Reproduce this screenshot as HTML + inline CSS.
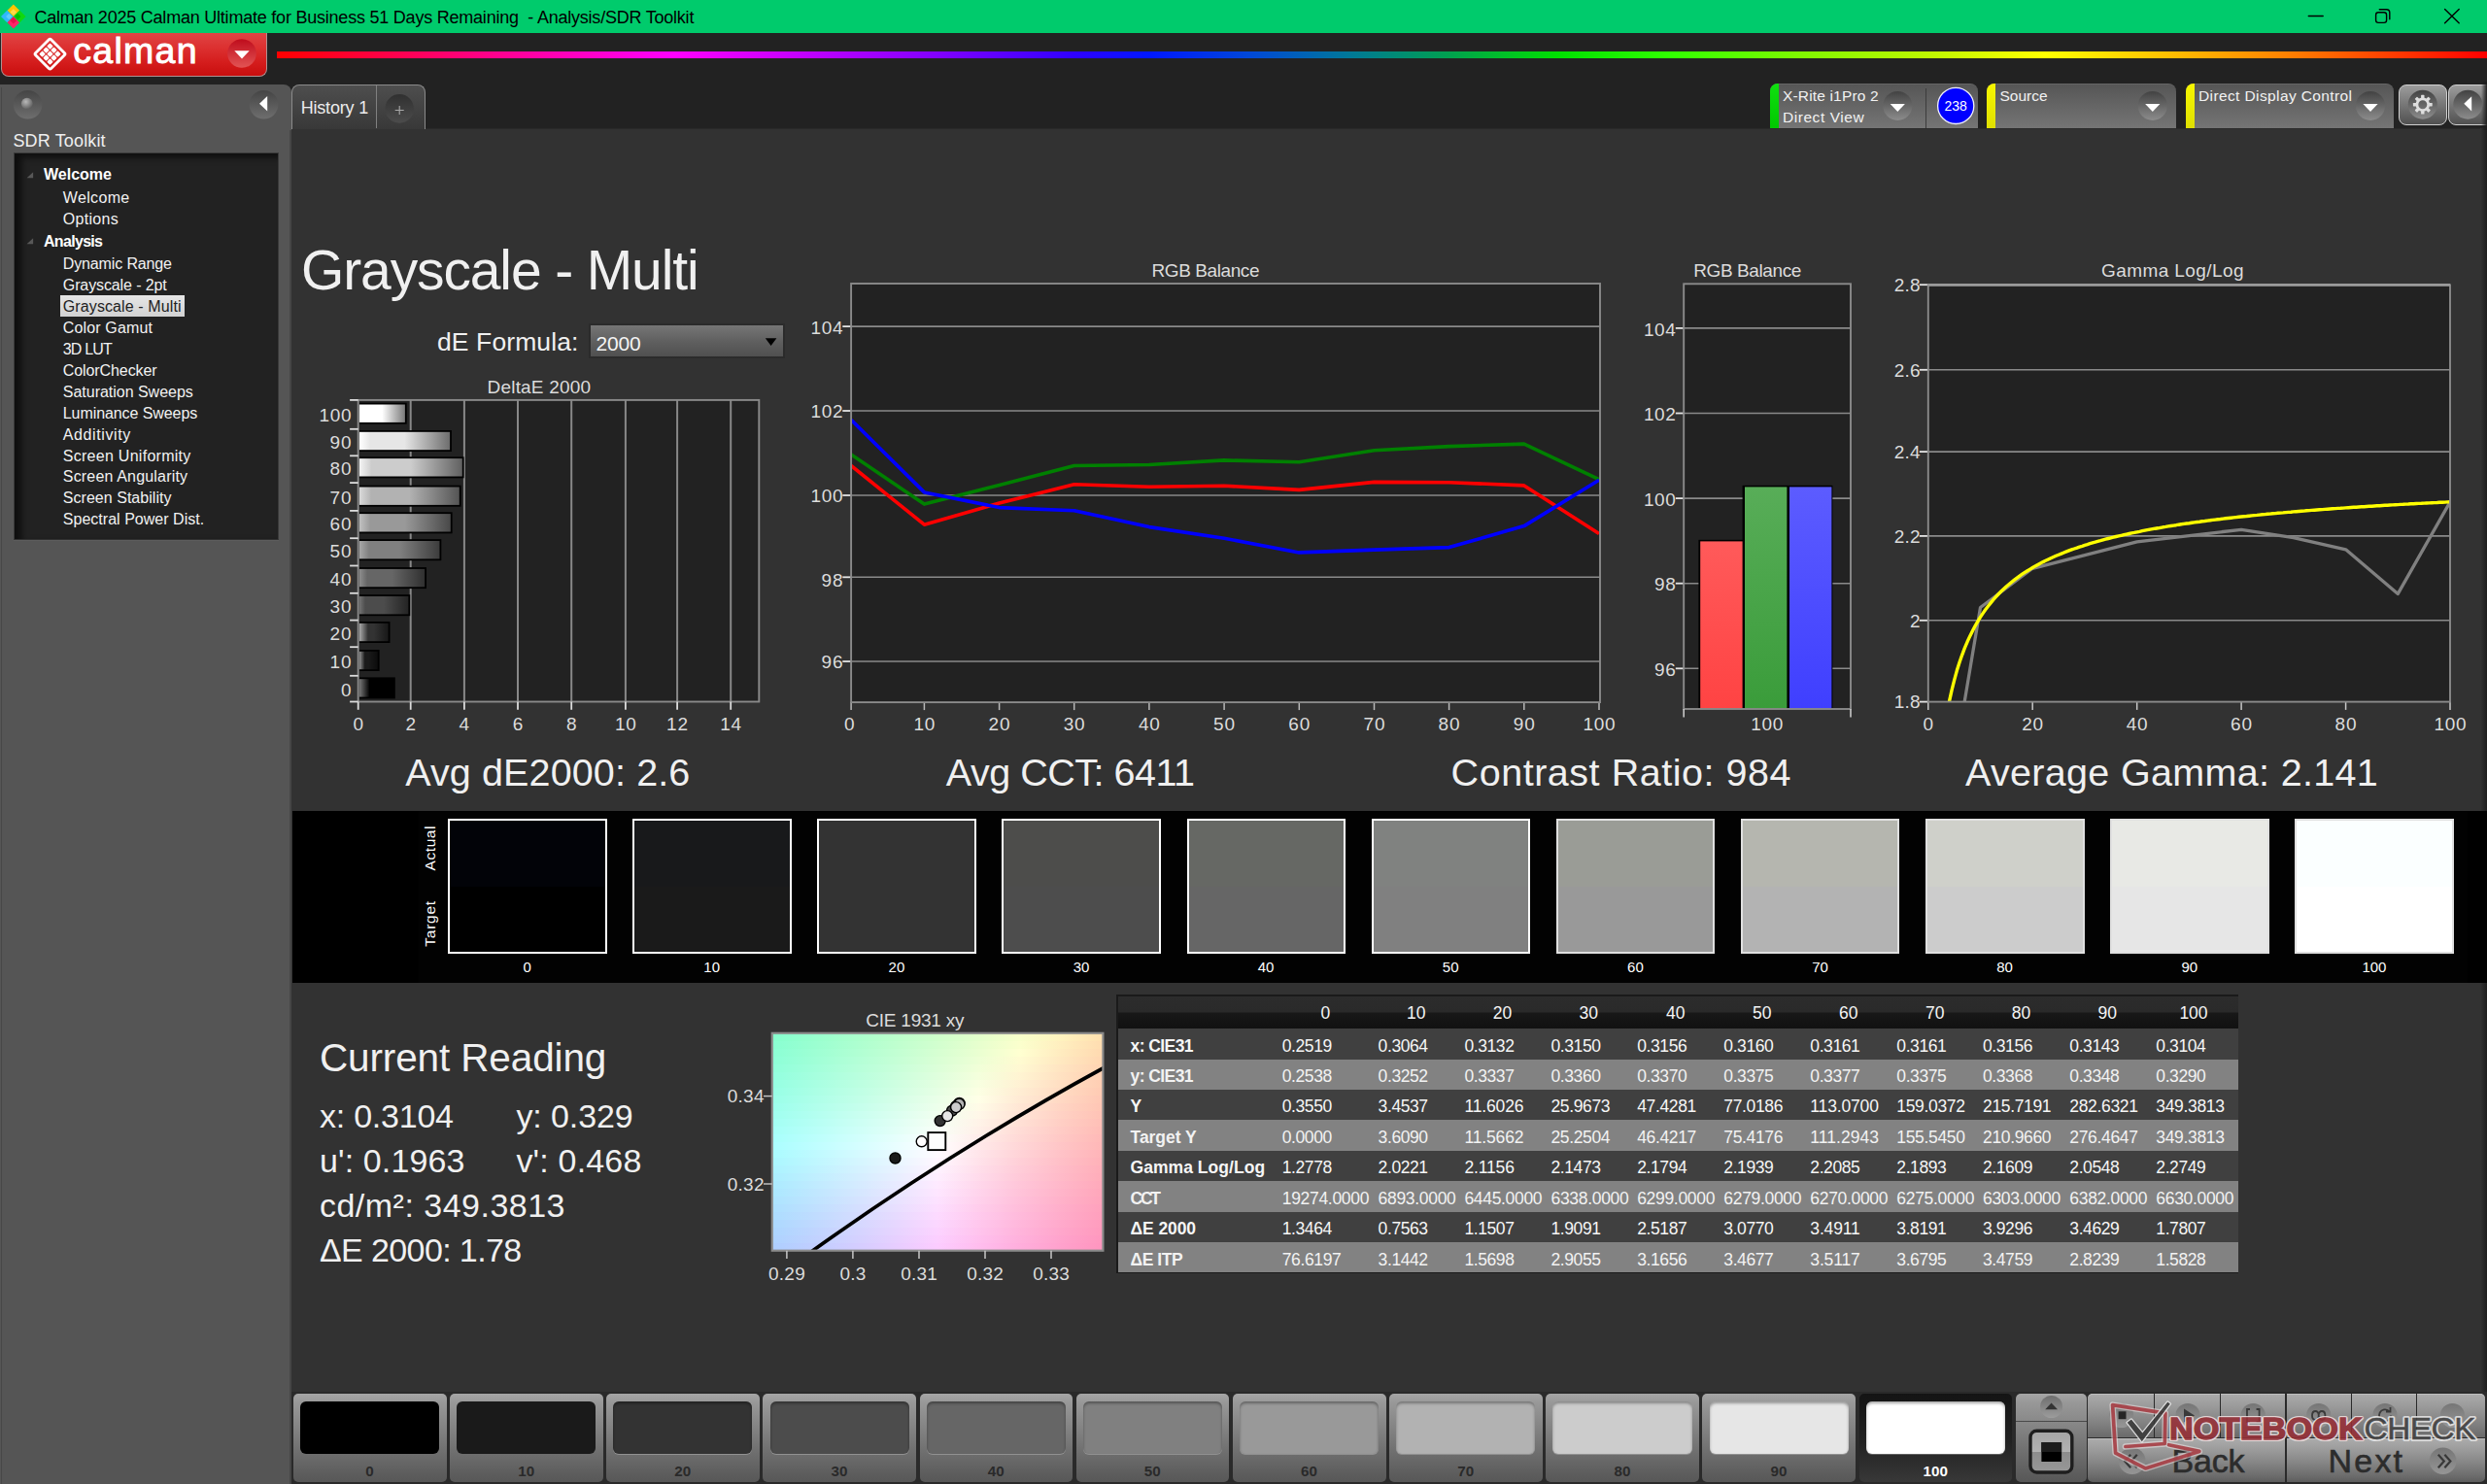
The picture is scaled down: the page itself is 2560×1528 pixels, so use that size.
<!DOCTYPE html>
<html><head><meta charset="utf-8"><title>Calman</title>
<style>
html,body{margin:0;padding:0;background:#222;}
html{overflow:hidden;width:2560px;height:1528px;}
body{width:2560px;height:1528px;position:relative;overflow:hidden;font-family:"Liberation Sans",sans-serif;}
#boxes div{position:absolute;box-sizing:border-box;}
#ov{position:absolute;left:0;top:0;}
#ov text{font-family:"Liberation Sans",sans-serif;}
</style></head><body>
<div id="boxes">
<div style="left:0.0px;top:0.0px;width:2560.0px;height:34.0px;background:#00cb6c;"></div>
<div style="left:0.5px;top:34.0px;width:274.5px;height:44.8px;background:linear-gradient(#e04444 0%,#dc3030 35%,#d41c1c 70%,#c80e0e 100%);border-radius:0 0 8px 8px;border:1px solid #b09090;border-top:none;"></div>
<div style="left:285.0px;top:52.8px;width:2275.0px;height:7.6px;background:linear-gradient(90deg,#ff0000 0%,#ff0048 5%,#ff0090 10%,#ff00ff 18%,#c000ff 24%,#8000ff 30%,#3000ff 36%,#0018ff 39.5%,#0048d8 44%,#007898 48.5%,#00a050 53%,#00e000 58%,#30ff00 63%,#80f800 69%,#c0f800 75%,#ffff00 80%,#ffc000 85.5%,#ff8000 91%,#ff3800 96%,#ff0000 100%);"></div>
<div style="left:0.0px;top:86.8px;width:299.6px;height:1450.0px;background:#555555;border-radius:0 8px 0 0;"></div>
<div style="left:0.9px;top:90.0px;width:1.2px;height:1440.0px;background:#484848;"></div>
<div style="left:298.2px;top:134.0px;width:1.9px;height:1400.0px;background:#464646;"></div>
<div style="left:13.6px;top:156.8px;width:273.0px;height:399.3px;background:#222;border:1px solid #3a3a3a;border-bottom:1.5px solid #303030;box-shadow:inset 7px 4px 7px rgba(0,0,0,.6),0 1px 0 #5c5c5c;"></div>
<div style="left:61.8px;top:304.4px;width:128.4px;height:21.8px;background:linear-gradient(#e6e6e6,#d2d2d2);"></div>
<div style="left:300.0px;top:132.0px;width:2260.0px;height:1400.0px;background:#323232;border-top:1.5px solid #2a2a2a;"></div>
<div style="left:2553.0px;top:132.0px;width:7.0px;height:1400.0px;background:linear-gradient(90deg,#323232,#1d1d1d);"></div>
<div style="left:300.0px;top:86.5px;width:138.4px;height:46.0px;background:linear-gradient(#4e4e4e,#383838);border:1.2px solid #8a8a8a;border-bottom:none;border-radius:8px 8px 0 0;"></div>
<div style="left:387.2px;top:87.5px;width:1.2px;height:44.5px;background:#808080;"></div>
<div style="left:1821.8px;top:86.4px;width:214.0px;height:45.6px;background:linear-gradient(#565656,#757575);border-radius:8px 8px 0 0;border-top:1px solid #666;overflow:hidden;"></div>
<div style="left:1821.8px;top:86.4px;width:9.0px;height:45.6px;background:linear-gradient(#10e010,#00c800);border-radius:8px 0 0 0;"></div>
<div style="left:2045.2px;top:86.4px;width:195.1px;height:45.6px;background:linear-gradient(#565656,#757575);border-radius:8px 8px 0 0;border-top:1px solid #666;overflow:hidden;"></div>
<div style="left:2045.2px;top:86.4px;width:9.0px;height:45.6px;background:linear-gradient(#f6f600,#e0e000);border-radius:8px 0 0 0;"></div>
<div style="left:2249.7px;top:86.4px;width:214.2px;height:45.6px;background:linear-gradient(#565656,#757575);border-radius:8px 8px 0 0;border-top:1px solid #666;overflow:hidden;"></div>
<div style="left:2249.7px;top:86.4px;width:9.0px;height:45.6px;background:linear-gradient(#f6f600,#e0e000);border-radius:8px 0 0 0;"></div>
<div style="left:1981.8px;top:91.4px;width:1.6px;height:40.6px;background:#3c3c3c;"></div>
<div style="left:2468.8px;top:86.5px;width:50.2px;height:42.0px;background:linear-gradient(#9c9c9c,#5c5c5c 85%,#505050);border:1.5px solid #d0d0d0;border-radius:8px;"></div>
<div style="left:2519.8px;top:86.5px;width:50.0px;height:42.0px;background:linear-gradient(#9c9c9c,#5c5c5c 85%,#505050);border:1.5px solid #d0d0d0;border-radius:8px;"></div>
<div style="left:2553.5px;top:84.0px;width:6.5px;height:50.0px;background:linear-gradient(90deg,rgba(30,30,30,0),rgba(26,26,26,.95));"></div>
<div style="left:605.9px;top:333.0px;width:202.0px;height:35.7px;background:linear-gradient(#767676,#5e5e5e 55%,#505050);border:2px solid #2b2b2b;"></div>
<div style="left:301.2px;top:835.3px;width:2259.0px;height:177.2px;background:#000;"></div>
<div style="left:431.0px;top:835.3px;width:2109.0px;height:177.2px;background:#020202;"></div>
<div style="left:461.0px;top:842.8px;width:163.5px;height:139.3px;background:linear-gradient(#020308 0,#020308 50%,#000000 50%,#000000 100%);border:2px solid #ffffff;"></div>
<div style="left:651.1px;top:842.8px;width:163.5px;height:139.3px;background:linear-gradient(#18191b 0,#18191b 50%,#1a1a1a 50%,#1a1a1a 100%);border:2px solid #ffffff;"></div>
<div style="left:841.3px;top:842.8px;width:163.5px;height:139.3px;background:linear-gradient(#333333 0,#333333 50%,#333333 50%,#333333 100%);border:2px solid #ffffff;"></div>
<div style="left:1031.4px;top:842.8px;width:163.5px;height:139.3px;background:linear-gradient(#4d4d4b 0,#4d4d4b 50%,#4d4d4d 50%,#4d4d4d 100%);border:2px solid #ffffff;"></div>
<div style="left:1221.5px;top:842.8px;width:163.5px;height:139.3px;background:linear-gradient(#666864 0,#666864 50%,#666666 50%,#666666 100%);border:2px solid #ffffff;"></div>
<div style="left:1411.7px;top:842.8px;width:163.5px;height:139.3px;background:linear-gradient(#808280 0,#808280 50%,#808080 50%,#808080 100%);border:2px solid #ffffff;"></div>
<div style="left:1601.8px;top:842.8px;width:163.5px;height:139.3px;background:linear-gradient(#9a9c96 0,#9a9c96 50%,#999999 50%,#999999 100%);border:2px solid #e0e0e0;"></div>
<div style="left:1791.9px;top:842.8px;width:163.5px;height:139.3px;background:linear-gradient(#b5b6af 0,#b5b6af 50%,#b3b3b3 50%,#b3b3b3 100%);border:2px solid #e0e0e0;"></div>
<div style="left:1982.0px;top:842.8px;width:163.5px;height:139.3px;background:linear-gradient(#cfd0ca 0,#cfd0ca 50%,#cccccc 50%,#cccccc 100%);border:2px solid #e0e0e0;"></div>
<div style="left:2172.2px;top:842.8px;width:163.5px;height:139.3px;background:linear-gradient(#e8e9e5 0,#e8e9e5 50%,#e6e6e6 50%,#e6e6e6 100%);border:2px solid #e0e0e0;"></div>
<div style="left:2362.3px;top:842.8px;width:163.5px;height:139.3px;background:linear-gradient(#fbffff 0,#fbffff 50%,#ffffff 50%,#ffffff 100%);border:2px solid #e0e0e0;"></div>
<div style="left:1149.2px;top:1024.2px;width:1155.3px;height:286.7px;background:#1a1a1a;"></div>
<div style="left:1151.2px;top:1026.0px;width:1153.3px;height:33.2px;background:linear-gradient(#2c2c2c 0,#2a2a2a 48%,#181818 52%,#111 100%);"></div>
<div style="left:1151.2px;top:1059.1px;width:1153.3px;height:31.6px;background:#404040;"></div>
<div style="left:1151.2px;top:1090.5px;width:1153.3px;height:31.6px;background:#828282;"></div>
<div style="left:1151.2px;top:1122.0px;width:1153.3px;height:31.6px;background:#404040;"></div>
<div style="left:1151.2px;top:1153.4px;width:1153.3px;height:31.6px;background:#828282;"></div>
<div style="left:1151.2px;top:1184.8px;width:1153.3px;height:31.6px;background:#404040;"></div>
<div style="left:1151.2px;top:1216.2px;width:1153.3px;height:31.6px;background:#828282;"></div>
<div style="left:1151.2px;top:1247.7px;width:1153.3px;height:31.6px;background:#404040;"></div>
<div style="left:1151.2px;top:1279.1px;width:1153.3px;height:31.3px;background:#828282;"></div>
<div style="left:300.0px;top:1433.4px;width:2260.0px;height:95.0px;background:#2a2a2a;"></div>
<div style="left:301.8px;top:1434.8px;width:157.8px;height:91.2px;background:linear-gradient(#a6a6a6 0,#989898 10%,#868686 35%,#6c6c6c 70%,#5c5c5c 92%,#585858);border-radius:5px;"></div>
<div style="left:309.0px;top:1442.5px;width:143.2px;height:54.0px;background:rgb(0,0,0);border-radius:6px;"></div>
<div style="left:463.0px;top:1434.8px;width:157.8px;height:91.2px;background:linear-gradient(#a6a6a6 0,#989898 10%,#868686 35%,#6c6c6c 70%,#5c5c5c 92%,#585858);border-radius:5px;"></div>
<div style="left:470.2px;top:1442.5px;width:143.2px;height:54.0px;background:rgb(26,26,26);border-radius:6px;"></div>
<div style="left:624.1px;top:1434.8px;width:157.8px;height:91.2px;background:linear-gradient(#a6a6a6 0,#989898 10%,#868686 35%,#6c6c6c 70%,#5c5c5c 92%,#585858);border-radius:5px;"></div>
<div style="left:631.3px;top:1442.5px;width:143.2px;height:54.0px;background:rgb(51,51,51);border-radius:6px;box-shadow:inset 0 2px 3px rgba(0,0,0,.35),0 1px 0 rgba(255,255,255,.25);"></div>
<div style="left:785.3px;top:1434.8px;width:157.8px;height:91.2px;background:linear-gradient(#a6a6a6 0,#989898 10%,#868686 35%,#6c6c6c 70%,#5c5c5c 92%,#585858);border-radius:5px;"></div>
<div style="left:792.5px;top:1442.5px;width:143.2px;height:54.0px;background:rgb(76,76,76);border-radius:6px;box-shadow:inset 0 2px 3px rgba(0,0,0,.35),0 1px 0 rgba(255,255,255,.25);"></div>
<div style="left:946.5px;top:1434.8px;width:157.8px;height:91.2px;background:linear-gradient(#a6a6a6 0,#989898 10%,#868686 35%,#6c6c6c 70%,#5c5c5c 92%,#585858);border-radius:5px;"></div>
<div style="left:953.7px;top:1442.5px;width:143.2px;height:54.0px;background:rgb(102,102,102);border-radius:6px;box-shadow:inset 0 2px 3px rgba(0,0,0,.35),0 1px 0 rgba(255,255,255,.25);"></div>
<div style="left:1107.6px;top:1434.8px;width:157.8px;height:91.2px;background:linear-gradient(#a6a6a6 0,#989898 10%,#868686 35%,#6c6c6c 70%,#5c5c5c 92%,#585858);border-radius:5px;"></div>
<div style="left:1114.8px;top:1442.5px;width:143.2px;height:54.0px;background:rgb(128,128,128);border-radius:6px;box-shadow:inset 0 2px 3px rgba(0,0,0,.35),0 1px 0 rgba(255,255,255,.25);"></div>
<div style="left:1268.8px;top:1434.8px;width:157.8px;height:91.2px;background:linear-gradient(#a6a6a6 0,#989898 10%,#868686 35%,#6c6c6c 70%,#5c5c5c 92%,#585858);border-radius:5px;"></div>
<div style="left:1276.0px;top:1442.5px;width:143.2px;height:54.0px;background:rgb(153,153,153);border-radius:6px;box-shadow:inset 0 2px 3px rgba(0,0,0,.35),0 1px 0 rgba(255,255,255,.25);"></div>
<div style="left:1430.0px;top:1434.8px;width:157.8px;height:91.2px;background:linear-gradient(#a6a6a6 0,#989898 10%,#868686 35%,#6c6c6c 70%,#5c5c5c 92%,#585858);border-radius:5px;"></div>
<div style="left:1437.2px;top:1442.5px;width:143.2px;height:54.0px;background:rgb(178,178,178);border-radius:6px;box-shadow:inset 0 2px 3px rgba(0,0,0,.35),0 1px 0 rgba(255,255,255,.25);"></div>
<div style="left:1591.2px;top:1434.8px;width:157.8px;height:91.2px;background:linear-gradient(#a6a6a6 0,#989898 10%,#868686 35%,#6c6c6c 70%,#5c5c5c 92%,#585858);border-radius:5px;"></div>
<div style="left:1598.4px;top:1442.5px;width:143.2px;height:54.0px;background:rgb(204,204,204);border-radius:6px;box-shadow:inset 0 2px 3px rgba(0,0,0,.35),0 1px 0 rgba(255,255,255,.25);"></div>
<div style="left:1752.3px;top:1434.8px;width:157.8px;height:91.2px;background:linear-gradient(#a6a6a6 0,#989898 10%,#868686 35%,#6c6c6c 70%,#5c5c5c 92%,#585858);border-radius:5px;"></div>
<div style="left:1759.5px;top:1442.5px;width:143.2px;height:54.0px;background:rgb(230,230,230);border-radius:6px;box-shadow:inset 0 2px 3px rgba(0,0,0,.35),0 1px 0 rgba(255,255,255,.25);"></div>
<div style="left:1913.5px;top:1434.8px;width:157.8px;height:91.2px;background:linear-gradient(#141414,#222 55%,#383838);border-radius:5px;"></div>
<div style="left:1920.7px;top:1442.5px;width:143.2px;height:54.0px;background:rgb(255,255,255);border-radius:6px;box-shadow:inset 0 2px 3px rgba(0,0,0,.35),0 1px 0 rgba(255,255,255,.25);"></div>
<div style="left:2075.4px;top:1434.8px;width:72.4px;height:91.2px;background:linear-gradient(#a6a6a6 0,#989898 10%,#868686 35%,#6c6c6c 70%,#5c5c5c 92%,#585858);border-radius:5px;"></div>
<div style="left:2075.4px;top:1462.6px;width:72.4px;height:1.4px;background:#4a4a4a;"></div>
<div style="left:2149.0px;top:1435.2px;width:68.0px;height:44.6px;background:linear-gradient(#ababab 0,#9a9a9a 30%,#7c7c7c 75%,#6a6a6a);box-shadow:inset 0 1px 0 #bdbdbd;border-radius:5px 0 0 0;"></div>
<div style="left:2218.2px;top:1435.2px;width:66.8px;height:44.6px;background:linear-gradient(#ababab 0,#9a9a9a 30%,#7c7c7c 75%,#6a6a6a);box-shadow:inset 0 1px 0 #bdbdbd;"></div>
<div style="left:2286.2px;top:1435.2px;width:66.1px;height:44.6px;background:linear-gradient(#ababab 0,#9a9a9a 30%,#7c7c7c 75%,#6a6a6a);box-shadow:inset 0 1px 0 #bdbdbd;"></div>
<div style="left:2353.5px;top:1435.2px;width:66.6px;height:44.6px;background:linear-gradient(#ababab 0,#9a9a9a 30%,#7c7c7c 75%,#6a6a6a);box-shadow:inset 0 1px 0 #bdbdbd;"></div>
<div style="left:2421.3px;top:1435.2px;width:65.7px;height:44.6px;background:linear-gradient(#ababab 0,#9a9a9a 30%,#7c7c7c 75%,#6a6a6a);box-shadow:inset 0 1px 0 #bdbdbd;"></div>
<div style="left:2488.2px;top:1435.2px;width:70.0px;height:44.6px;background:linear-gradient(#ababab 0,#9a9a9a 30%,#7c7c7c 75%,#6a6a6a);box-shadow:inset 0 1px 0 #bdbdbd;border-radius:0 5px 0 0;"></div>
<div style="left:2149.0px;top:1481.2px;width:203.4px;height:44.6px;background:linear-gradient(#acacac 0,#9c9c9c 25%,#868686 55%,#6a6a6a 88%,#5e5e5e);box-shadow:inset 0 1px 0 #bdbdbd;border-radius:0 0 0 5px;"></div>
<div style="left:2353.7px;top:1481.2px;width:204.6px;height:44.6px;background:linear-gradient(#acacac 0,#9c9c9c 25%,#868686 55%,#6a6a6a 88%,#5e5e5e);box-shadow:inset 0 1px 0 #bdbdbd;border-radius:0 0 5px 0;"></div>
</div>
<svg id="ov" width="2560" height="1528" viewBox="0 0 2560 1528">
<defs>
<linearGradient id="rc" x1="0" y1="0" x2="0" y2="1"><stop offset="0" stop-color="#bf0c1c"/><stop offset="1" stop-color="#e25454"/></linearGradient>
<linearGradient id="gc" x1="0" y1="0" x2="0" y2="1"><stop offset="0" stop-color="#454545"/><stop offset="1" stop-color="#6e6e6e"/></linearGradient>
<radialGradient id="ball" cx="0.4" cy="0.35" r="0.7"><stop offset="0" stop-color="#b8b8b8"/><stop offset="1" stop-color="#5a5a5a"/></radialGradient>
<linearGradient id="dk" x1="0" y1="0" x2="0" y2="1"><stop offset="0" stop-color="#303030"/><stop offset="1" stop-color="#4c4c4c"/></linearGradient>
<linearGradient id="dd" x1="0" y1="0" x2="0" y2="1"><stop offset="0" stop-color="#424242"/><stop offset="1" stop-color="#8c8c8c"/></linearGradient>
<linearGradient id="b0" x1="0" y1="0" x2="1" y2="0"><stop offset="0" stop-color="rgb(120,120,120)"/><stop offset="0.3" stop-color="rgb(0,0,0)"/><stop offset="0.5" stop-color="rgb(0,0,0)"/><stop offset="1" stop-color="rgb(0,0,0)"/></linearGradient>
<linearGradient id="b1" x1="0" y1="0" x2="1" y2="0"><stop offset="0" stop-color="rgb(146,146,146)"/><stop offset="0.3" stop-color="rgb(26,26,26)"/><stop offset="0.5" stop-color="rgb(26,26,26)"/><stop offset="1" stop-color="rgb(12,12,12)"/></linearGradient>
<linearGradient id="b2" x1="0" y1="0" x2="1" y2="0"><stop offset="0" stop-color="rgb(171,171,171)"/><stop offset="0.3" stop-color="rgb(51,51,51)"/><stop offset="0.5" stop-color="rgb(51,51,51)"/><stop offset="1" stop-color="rgb(24,24,24)"/></linearGradient>
<linearGradient id="b3" x1="0" y1="0" x2="1" y2="0"><stop offset="0" stop-color="rgb(116,116,116)"/><stop offset="0.12" stop-color="rgb(76,76,76)"/><stop offset="0.5" stop-color="rgb(76,76,76)"/><stop offset="1" stop-color="rgb(36,36,36)"/></linearGradient>
<linearGradient id="b4" x1="0" y1="0" x2="1" y2="0"><stop offset="0" stop-color="rgb(142,142,142)"/><stop offset="0.12" stop-color="rgb(102,102,102)"/><stop offset="0.5" stop-color="rgb(102,102,102)"/><stop offset="1" stop-color="rgb(48,48,48)"/></linearGradient>
<linearGradient id="b5" x1="0" y1="0" x2="1" y2="0"><stop offset="0" stop-color="rgb(168,168,168)"/><stop offset="0.12" stop-color="rgb(128,128,128)"/><stop offset="0.5" stop-color="rgb(128,128,128)"/><stop offset="1" stop-color="rgb(61,61,61)"/></linearGradient>
<linearGradient id="b6" x1="0" y1="0" x2="1" y2="0"><stop offset="0" stop-color="rgb(193,193,193)"/><stop offset="0.12" stop-color="rgb(153,153,153)"/><stop offset="0.5" stop-color="rgb(153,153,153)"/><stop offset="1" stop-color="rgb(73,73,73)"/></linearGradient>
<linearGradient id="b7" x1="0" y1="0" x2="1" y2="0"><stop offset="0" stop-color="rgb(218,218,218)"/><stop offset="0.12" stop-color="rgb(178,178,178)"/><stop offset="0.5" stop-color="rgb(178,178,178)"/><stop offset="1" stop-color="rgb(85,85,85)"/></linearGradient>
<linearGradient id="b8" x1="0" y1="0" x2="1" y2="0"><stop offset="0" stop-color="rgb(244,244,244)"/><stop offset="0.12" stop-color="rgb(204,204,204)"/><stop offset="0.5" stop-color="rgb(204,204,204)"/><stop offset="1" stop-color="rgb(97,97,97)"/></linearGradient>
<linearGradient id="b9" x1="0" y1="0" x2="1" y2="0"><stop offset="0" stop-color="rgb(255,255,255)"/><stop offset="0.12" stop-color="rgb(230,230,230)"/><stop offset="0.5" stop-color="rgb(230,230,230)"/><stop offset="1" stop-color="rgb(110,110,110)"/></linearGradient>
<linearGradient id="b10" x1="0" y1="0" x2="1" y2="0"><stop offset="0" stop-color="rgb(255,255,255)"/><stop offset="0.12" stop-color="rgb(255,255,255)"/><stop offset="0.5" stop-color="rgb(255,255,255)"/><stop offset="1" stop-color="rgb(122,122,122)"/></linearGradient>
<linearGradient id="br" x1="0" y1="0" x2="0" y2="1"><stop offset="0" stop-color="#ff5a5a"/><stop offset="1" stop-color="#ff4343"/></linearGradient>
<linearGradient id="bg" x1="0" y1="0" x2="0" y2="1"><stop offset="0" stop-color="#58ad58"/><stop offset="1" stop-color="#3a9c3a"/></linearGradient>
<linearGradient id="bb" x1="0" y1="0" x2="0" y2="1"><stop offset="0" stop-color="#5c5cff"/><stop offset="1" stop-color="#3f3fff"/></linearGradient>
<linearGradient id="c0" x1="0" y1="0" x2="1" y2="0"><stop offset="0.000" stop-color="rgb(134,255,206)"/><stop offset="0.125" stop-color="rgb(152,255,206)"/><stop offset="0.250" stop-color="rgb(170,255,205)"/><stop offset="0.375" stop-color="rgb(188,255,204)"/><stop offset="0.500" stop-color="rgb(207,255,203)"/><stop offset="0.625" stop-color="rgb(227,255,203)"/><stop offset="0.750" stop-color="rgb(248,255,202)"/><stop offset="0.875" stop-color="rgb(255,242,190)"/><stop offset="1.000" stop-color="rgb(255,224,175)"/></linearGradient>
<linearGradient id="c1" x1="0" y1="0" x2="1" y2="0"><stop offset="0.000" stop-color="rgb(137,255,210)"/><stop offset="0.125" stop-color="rgb(154,255,209)"/><stop offset="0.250" stop-color="rgb(172,255,208)"/><stop offset="0.375" stop-color="rgb(191,255,207)"/><stop offset="0.500" stop-color="rgb(210,255,207)"/><stop offset="0.625" stop-color="rgb(231,255,206)"/><stop offset="0.750" stop-color="rgb(251,255,205)"/><stop offset="0.875" stop-color="rgb(255,238,191)"/><stop offset="1.000" stop-color="rgb(255,220,176)"/></linearGradient>
<linearGradient id="c2" x1="0" y1="0" x2="1" y2="0"><stop offset="0.000" stop-color="rgb(139,255,213)"/><stop offset="0.125" stop-color="rgb(157,255,212)"/><stop offset="0.250" stop-color="rgb(175,255,211)"/><stop offset="0.375" stop-color="rgb(194,255,211)"/><stop offset="0.500" stop-color="rgb(214,255,210)"/><stop offset="0.625" stop-color="rgb(234,255,209)"/><stop offset="0.750" stop-color="rgb(255,255,209)"/><stop offset="0.875" stop-color="rgb(255,235,191)"/><stop offset="1.000" stop-color="rgb(255,217,176)"/></linearGradient>
<linearGradient id="c3" x1="0" y1="0" x2="1" y2="0"><stop offset="0.000" stop-color="rgb(141,255,216)"/><stop offset="0.125" stop-color="rgb(159,255,215)"/><stop offset="0.250" stop-color="rgb(178,255,215)"/><stop offset="0.375" stop-color="rgb(197,255,214)"/><stop offset="0.500" stop-color="rgb(217,255,213)"/><stop offset="0.625" stop-color="rgb(237,255,213)"/><stop offset="0.750" stop-color="rgb(255,251,209)"/><stop offset="0.875" stop-color="rgb(255,232,192)"/><stop offset="1.000" stop-color="rgb(255,214,177)"/></linearGradient>
<linearGradient id="c4" x1="0" y1="0" x2="1" y2="0"><stop offset="0.000" stop-color="rgb(144,255,219)"/><stop offset="0.125" stop-color="rgb(162,255,219)"/><stop offset="0.250" stop-color="rgb(181,255,218)"/><stop offset="0.375" stop-color="rgb(200,255,218)"/><stop offset="0.500" stop-color="rgb(220,255,217)"/><stop offset="0.625" stop-color="rgb(241,255,216)"/><stop offset="0.750" stop-color="rgb(255,248,210)"/><stop offset="0.875" stop-color="rgb(255,228,193)"/><stop offset="1.000" stop-color="rgb(255,211,178)"/></linearGradient>
<linearGradient id="c5" x1="0" y1="0" x2="1" y2="0"><stop offset="0.000" stop-color="rgb(146,255,223)"/><stop offset="0.125" stop-color="rgb(165,255,222)"/><stop offset="0.250" stop-color="rgb(183,255,222)"/><stop offset="0.375" stop-color="rgb(203,255,221)"/><stop offset="0.500" stop-color="rgb(223,255,221)"/><stop offset="0.625" stop-color="rgb(244,255,220)"/><stop offset="0.750" stop-color="rgb(255,244,210)"/><stop offset="0.875" stop-color="rgb(255,225,193)"/><stop offset="1.000" stop-color="rgb(255,208,178)"/></linearGradient>
<linearGradient id="c6" x1="0" y1="0" x2="1" y2="0"><stop offset="0.000" stop-color="rgb(149,255,226)"/><stop offset="0.125" stop-color="rgb(167,255,226)"/><stop offset="0.250" stop-color="rgb(186,255,225)"/><stop offset="0.375" stop-color="rgb(206,255,225)"/><stop offset="0.500" stop-color="rgb(227,255,224)"/><stop offset="0.625" stop-color="rgb(248,255,224)"/><stop offset="0.750" stop-color="rgb(255,241,211)"/><stop offset="0.875" stop-color="rgb(255,222,194)"/><stop offset="1.000" stop-color="rgb(255,205,179)"/></linearGradient>
<linearGradient id="c7" x1="0" y1="0" x2="1" y2="0"><stop offset="0.000" stop-color="rgb(151,255,230)"/><stop offset="0.125" stop-color="rgb(170,255,229)"/><stop offset="0.250" stop-color="rgb(189,255,229)"/><stop offset="0.375" stop-color="rgb(209,255,228)"/><stop offset="0.500" stop-color="rgb(230,255,228)"/><stop offset="0.625" stop-color="rgb(252,255,227)"/><stop offset="0.750" stop-color="rgb(255,237,211)"/><stop offset="0.875" stop-color="rgb(255,219,194)"/><stop offset="1.000" stop-color="rgb(255,202,179)"/></linearGradient>
<linearGradient id="c8" x1="0" y1="0" x2="1" y2="0"><stop offset="0.000" stop-color="rgb(154,255,233)"/><stop offset="0.125" stop-color="rgb(173,255,233)"/><stop offset="0.250" stop-color="rgb(192,255,232)"/><stop offset="0.375" stop-color="rgb(213,255,232)"/><stop offset="0.500" stop-color="rgb(234,255,232)"/><stop offset="0.625" stop-color="rgb(255,255,231)"/><stop offset="0.750" stop-color="rgb(255,234,212)"/><stop offset="0.875" stop-color="rgb(255,216,195)"/><stop offset="1.000" stop-color="rgb(255,199,180)"/></linearGradient>
<linearGradient id="c9" x1="0" y1="0" x2="1" y2="0"><stop offset="0.000" stop-color="rgb(156,255,237)"/><stop offset="0.125" stop-color="rgb(176,255,236)"/><stop offset="0.250" stop-color="rgb(195,255,236)"/><stop offset="0.375" stop-color="rgb(216,255,236)"/><stop offset="0.500" stop-color="rgb(237,255,235)"/><stop offset="0.625" stop-color="rgb(255,251,231)"/><stop offset="0.750" stop-color="rgb(255,230,212)"/><stop offset="0.875" stop-color="rgb(255,212,195)"/><stop offset="1.000" stop-color="rgb(255,197,180)"/></linearGradient>
<linearGradient id="c10" x1="0" y1="0" x2="1" y2="0"><stop offset="0.000" stop-color="rgb(159,255,240)"/><stop offset="0.125" stop-color="rgb(178,255,240)"/><stop offset="0.250" stop-color="rgb(199,255,240)"/><stop offset="0.375" stop-color="rgb(219,255,240)"/><stop offset="0.500" stop-color="rgb(241,255,239)"/><stop offset="0.625" stop-color="rgb(255,247,232)"/><stop offset="0.750" stop-color="rgb(255,227,213)"/><stop offset="0.875" stop-color="rgb(255,209,196)"/><stop offset="1.000" stop-color="rgb(255,194,181)"/></linearGradient>
<linearGradient id="c11" x1="0" y1="0" x2="1" y2="0"><stop offset="0.000" stop-color="rgb(162,255,244)"/><stop offset="0.125" stop-color="rgb(181,255,244)"/><stop offset="0.250" stop-color="rgb(202,255,244)"/><stop offset="0.375" stop-color="rgb(223,255,244)"/><stop offset="0.500" stop-color="rgb(245,255,243)"/><stop offset="0.625" stop-color="rgb(255,243,232)"/><stop offset="0.750" stop-color="rgb(255,224,213)"/><stop offset="0.875" stop-color="rgb(255,206,196)"/><stop offset="1.000" stop-color="rgb(255,191,182)"/></linearGradient>
<linearGradient id="c12" x1="0" y1="0" x2="1" y2="0"><stop offset="0.000" stop-color="rgb(165,255,248)"/><stop offset="0.125" stop-color="rgb(184,255,248)"/><stop offset="0.250" stop-color="rgb(205,255,248)"/><stop offset="0.375" stop-color="rgb(226,255,247)"/><stop offset="0.500" stop-color="rgb(248,255,247)"/><stop offset="0.625" stop-color="rgb(255,240,232)"/><stop offset="0.750" stop-color="rgb(255,220,214)"/><stop offset="0.875" stop-color="rgb(255,203,197)"/><stop offset="1.000" stop-color="rgb(255,188,182)"/></linearGradient>
<linearGradient id="c13" x1="0" y1="0" x2="1" y2="0"><stop offset="0.000" stop-color="rgb(167,255,252)"/><stop offset="0.125" stop-color="rgb(187,255,252)"/><stop offset="0.250" stop-color="rgb(208,255,252)"/><stop offset="0.375" stop-color="rgb(230,255,252)"/><stop offset="0.500" stop-color="rgb(252,255,252)"/><stop offset="0.625" stop-color="rgb(255,236,233)"/><stop offset="0.750" stop-color="rgb(255,217,214)"/><stop offset="0.875" stop-color="rgb(255,200,197)"/><stop offset="1.000" stop-color="rgb(255,185,183)"/></linearGradient>
<linearGradient id="c14" x1="0" y1="0" x2="1" y2="0"><stop offset="0.000" stop-color="rgb(170,254,255)"/><stop offset="0.125" stop-color="rgb(190,254,255)"/><stop offset="0.250" stop-color="rgb(211,254,255)"/><stop offset="0.375" stop-color="rgb(233,254,255)"/><stop offset="0.500" stop-color="rgb(255,254,255)"/><stop offset="0.625" stop-color="rgb(255,233,233)"/><stop offset="0.750" stop-color="rgb(255,214,215)"/><stop offset="0.875" stop-color="rgb(255,197,198)"/><stop offset="1.000" stop-color="rgb(255,183,183)"/></linearGradient>
<linearGradient id="c15" x1="0" y1="0" x2="1" y2="0"><stop offset="0.000" stop-color="rgb(170,251,255)"/><stop offset="0.125" stop-color="rgb(190,250,255)"/><stop offset="0.250" stop-color="rgb(211,250,255)"/><stop offset="0.375" stop-color="rgb(233,250,255)"/><stop offset="0.500" stop-color="rgb(255,250,255)"/><stop offset="0.625" stop-color="rgb(255,229,234)"/><stop offset="0.750" stop-color="rgb(255,211,215)"/><stop offset="0.875" stop-color="rgb(255,194,199)"/><stop offset="1.000" stop-color="rgb(255,180,184)"/></linearGradient>
<linearGradient id="c16" x1="0" y1="0" x2="1" y2="0"><stop offset="0.000" stop-color="rgb(170,247,255)"/><stop offset="0.125" stop-color="rgb(190,247,255)"/><stop offset="0.250" stop-color="rgb(211,246,255)"/><stop offset="0.375" stop-color="rgb(232,246,255)"/><stop offset="0.500" stop-color="rgb(255,246,255)"/><stop offset="0.625" stop-color="rgb(255,226,234)"/><stop offset="0.750" stop-color="rgb(255,207,215)"/><stop offset="0.875" stop-color="rgb(255,191,199)"/><stop offset="1.000" stop-color="rgb(255,177,184)"/></linearGradient>
<linearGradient id="c17" x1="0" y1="0" x2="1" y2="0"><stop offset="0.000" stop-color="rgb(171,243,255)"/><stop offset="0.125" stop-color="rgb(190,243,255)"/><stop offset="0.250" stop-color="rgb(211,242,255)"/><stop offset="0.375" stop-color="rgb(232,242,255)"/><stop offset="0.500" stop-color="rgb(254,242,255)"/><stop offset="0.625" stop-color="rgb(255,222,234)"/><stop offset="0.750" stop-color="rgb(255,204,216)"/><stop offset="0.875" stop-color="rgb(255,188,200)"/><stop offset="1.000" stop-color="rgb(255,174,185)"/></linearGradient>
<linearGradient id="c18" x1="0" y1="0" x2="1" y2="0"><stop offset="0.000" stop-color="rgb(171,239,255)"/><stop offset="0.125" stop-color="rgb(191,239,255)"/><stop offset="0.250" stop-color="rgb(211,238,255)"/><stop offset="0.375" stop-color="rgb(232,238,255)"/><stop offset="0.500" stop-color="rgb(254,238,255)"/><stop offset="0.625" stop-color="rgb(255,219,235)"/><stop offset="0.750" stop-color="rgb(255,201,216)"/><stop offset="0.875" stop-color="rgb(255,186,200)"/><stop offset="1.000" stop-color="rgb(255,172,185)"/></linearGradient>
<linearGradient id="c19" x1="0" y1="0" x2="1" y2="0"><stop offset="0.000" stop-color="rgb(171,235,255)"/><stop offset="0.125" stop-color="rgb(191,235,255)"/><stop offset="0.250" stop-color="rgb(211,235,255)"/><stop offset="0.375" stop-color="rgb(232,234,255)"/><stop offset="0.500" stop-color="rgb(254,234,255)"/><stop offset="0.625" stop-color="rgb(255,215,235)"/><stop offset="0.750" stop-color="rgb(255,198,217)"/><stop offset="0.875" stop-color="rgb(255,183,201)"/><stop offset="1.000" stop-color="rgb(255,169,186)"/></linearGradient>
<linearGradient id="c20" x1="0" y1="0" x2="1" y2="0"><stop offset="0.000" stop-color="rgb(171,232,255)"/><stop offset="0.125" stop-color="rgb(191,231,255)"/><stop offset="0.250" stop-color="rgb(211,231,255)"/><stop offset="0.375" stop-color="rgb(232,230,255)"/><stop offset="0.500" stop-color="rgb(254,230,255)"/><stop offset="0.625" stop-color="rgb(255,212,236)"/><stop offset="0.750" stop-color="rgb(255,195,217)"/><stop offset="0.875" stop-color="rgb(255,180,201)"/><stop offset="1.000" stop-color="rgb(255,166,186)"/></linearGradient>
<linearGradient id="c21" x1="0" y1="0" x2="1" y2="0"><stop offset="0.000" stop-color="rgb(172,228,255)"/><stop offset="0.125" stop-color="rgb(191,228,255)"/><stop offset="0.250" stop-color="rgb(211,227,255)"/><stop offset="0.375" stop-color="rgb(232,227,255)"/><stop offset="0.500" stop-color="rgb(253,226,255)"/><stop offset="0.625" stop-color="rgb(255,209,236)"/><stop offset="0.750" stop-color="rgb(255,192,218)"/><stop offset="0.875" stop-color="rgb(255,177,201)"/><stop offset="1.000" stop-color="rgb(255,164,187)"/></linearGradient>
<linearGradient id="c22" x1="0" y1="0" x2="1" y2="0"><stop offset="0.000" stop-color="rgb(172,224,255)"/><stop offset="0.125" stop-color="rgb(191,224,255)"/><stop offset="0.250" stop-color="rgb(211,223,255)"/><stop offset="0.375" stop-color="rgb(232,223,255)"/><stop offset="0.500" stop-color="rgb(253,222,255)"/><stop offset="0.625" stop-color="rgb(255,205,236)"/><stop offset="0.750" stop-color="rgb(255,189,218)"/><stop offset="0.875" stop-color="rgb(255,174,202)"/><stop offset="1.000" stop-color="rgb(255,161,188)"/></linearGradient>
<linearGradient id="c23" x1="0" y1="0" x2="1" y2="0"><stop offset="0.000" stop-color="rgb(172,221,255)"/><stop offset="0.125" stop-color="rgb(191,220,255)"/><stop offset="0.250" stop-color="rgb(211,220,255)"/><stop offset="0.375" stop-color="rgb(231,219,255)"/><stop offset="0.500" stop-color="rgb(253,218,255)"/><stop offset="0.625" stop-color="rgb(255,202,237)"/><stop offset="0.750" stop-color="rgb(255,186,219)"/><stop offset="0.875" stop-color="rgb(255,172,202)"/><stop offset="1.000" stop-color="rgb(255,159,188)"/></linearGradient>
<linearGradient id="c24" x1="0" y1="0" x2="1" y2="0"><stop offset="0.000" stop-color="rgb(172,217,255)"/><stop offset="0.125" stop-color="rgb(191,217,255)"/><stop offset="0.250" stop-color="rgb(211,216,255)"/><stop offset="0.375" stop-color="rgb(231,215,255)"/><stop offset="0.500" stop-color="rgb(252,215,255)"/><stop offset="0.625" stop-color="rgb(255,199,237)"/><stop offset="0.750" stop-color="rgb(255,183,219)"/><stop offset="0.875" stop-color="rgb(255,169,203)"/><stop offset="1.000" stop-color="rgb(255,156,189)"/></linearGradient>
<linearGradient id="c25" x1="0" y1="0" x2="1" y2="0"><stop offset="0.000" stop-color="rgb(172,214,255)"/><stop offset="0.125" stop-color="rgb(191,213,255)"/><stop offset="0.250" stop-color="rgb(211,212,255)"/><stop offset="0.375" stop-color="rgb(231,212,255)"/><stop offset="0.500" stop-color="rgb(252,211,255)"/><stop offset="0.625" stop-color="rgb(255,196,237)"/><stop offset="0.750" stop-color="rgb(255,180,219)"/><stop offset="0.875" stop-color="rgb(255,166,203)"/><stop offset="1.000" stop-color="rgb(255,154,189)"/></linearGradient>
<linearGradient id="c26" x1="0" y1="0" x2="1" y2="0"><stop offset="0.000" stop-color="rgb(173,211,255)"/><stop offset="0.125" stop-color="rgb(192,210,255)"/><stop offset="0.250" stop-color="rgb(211,209,255)"/><stop offset="0.375" stop-color="rgb(231,208,255)"/><stop offset="0.500" stop-color="rgb(252,207,255)"/><stop offset="0.625" stop-color="rgb(255,192,238)"/><stop offset="0.750" stop-color="rgb(255,177,220)"/><stop offset="0.875" stop-color="rgb(255,163,204)"/><stop offset="1.000" stop-color="rgb(255,151,190)"/></linearGradient>
<linearGradient id="c27" x1="0" y1="0" x2="1" y2="0"><stop offset="0.000" stop-color="rgb(173,207,255)"/><stop offset="0.125" stop-color="rgb(192,206,255)"/><stop offset="0.250" stop-color="rgb(211,205,255)"/><stop offset="0.375" stop-color="rgb(231,205,255)"/><stop offset="0.500" stop-color="rgb(252,204,255)"/><stop offset="0.625" stop-color="rgb(255,189,238)"/><stop offset="0.750" stop-color="rgb(255,174,220)"/><stop offset="0.875" stop-color="rgb(255,161,204)"/><stop offset="1.000" stop-color="rgb(255,149,190)"/></linearGradient>
<linearGradient id="lt" x1="0" y1="0" x2="0" y2="1"><stop offset="0" stop-color="#6e6e6e"/><stop offset="1" stop-color="#9c9c9c"/></linearGradient>
<linearGradient id="gl" x1="0" y1="0" x2="0" y2="1"><stop offset="0" stop-color="#a4a4a4"/><stop offset="0.5" stop-color="#b2b2b2"/><stop offset="0.5" stop-color="#8c8c8c"/><stop offset="1" stop-color="#989898"/></linearGradient>
</defs>
<path d="M13.8,4.500000000000001 L20.1,10.8 L13.8,17.1 L7.500000000000001,10.8 Z" fill="#ffc400"/><path d="M7.3,10.7 L13.6,17 L7.3,23.3 L1.0,17 Z" fill="#2fb8ff"/><path d="M20.3,10.7 L26.6,17 L20.3,23.3 L14.0,17 Z" fill="#10d810"/><path d="M13.8,16.9 L20.1,23.2 L13.8,29.5 L7.500000000000001,23.2 Z" fill="#ff2468"/>
<path d="M13.8,9.2 L17.2,12.6 L13.8,16.0 L10.4,12.6 Z" fill="#ffd84a"/><path d="M9.3,13.8 L12.5,17 L9.3,20.2 L6.1000000000000005,17 Z" fill="#5ccaff"/><path d="M18.3,13.8 L21.5,17 L18.3,20.2 L15.100000000000001,17 Z" fill="#00c000"/><path d="M13.8,17.8 L17.2,21.2 L13.8,24.599999999999998 L10.4,21.2 Z" fill="#e8104e"/>
<text x="35.4" y="23.8" font-size="18" fill="#000" textLength="679.0" lengthAdjust="spacing" xml:space="preserve">Calman 2025 Calman Ultimate for Business 51 Days Remaining  - Analysis/SDR Toolkit</text>
<g stroke="#000" stroke-width="1.4" fill="none" stroke-linecap="round"><path d="M2376.3,16.5 H2391.2"/><rect x="2445.6" y="12.8" width="11" height="10.6" rx="2.6"/><path d="M2449.3,9.7 H2456.5 a3.3,3.3 0 0 1 3.3,3.3 V19.8"/><path d="M2516.6,9.6 L2531.2,23.8 M2531.2,9.6 L2516.6,23.8"/></g>
<g transform="translate(51.5,55.6) rotate(45)" fill="none" stroke="#fff"><rect x="-11.3" y="-11.3" width="22.6" height="22.6" rx="1.6" stroke-width="2.9"/></g><g transform="translate(51.5,55.6) rotate(45)" fill="#fff"><rect x="-7.95" y="-7.95" width="4.7" height="4.7" rx="0.9"/><rect x="-7.95" y="-2.35" width="4.7" height="4.7" rx="0.9"/><rect x="-7.95" y="3.25" width="4.7" height="4.7" rx="0.9"/><rect x="-2.35" y="-7.95" width="4.7" height="4.7" rx="0.9"/><rect x="-2.35" y="-2.35" width="4.7" height="4.7" rx="0.9"/><rect x="-2.35" y="3.25" width="4.7" height="4.7" rx="0.9"/><rect x="3.25" y="-7.95" width="4.7" height="4.7" rx="0.9"/><rect x="3.25" y="-2.35" width="4.7" height="4.7" rx="0.9"/><rect x="3.25" y="3.25" width="4.7" height="4.7" rx="0.9"/></g>
<text x="75.3" y="65.0" font-size="37.5" fill="#fff" textLength="127.3" lengthAdjust="spacing" stroke="#fff" stroke-width="0.9">calman</text>
<circle cx="249" cy="55" r="14.8" fill="url(#rc)"/><path d="M241.3,52.2 H256.7 L249,60.6 Z" fill="#fff"/>
<circle cx="28.6" cy="107.8" r="14.8" fill="url(#gc)"/><circle cx="27.8" cy="106.6" r="5.9" fill="url(#ball)"/>
<circle cx="271.5" cy="107.8" r="14.8" fill="url(#gc)"/><path d="M267,106.8 L275.2,99 V114.4 Z" fill="#fff"/>
<text x="13.4" y="151.3" font-size="18" fill="#efefef" textLength="95.2" lengthAdjust="spacing">SDR Toolkit</text>
<path d="M34.1,177.2 V183.3 H27.6 Z" fill="#585858"/><path d="M34.1,245.2 V251.2 H27.6 Z" fill="#585858"/>
<text x="45.0" y="185.3" font-size="16" fill="#fff" font-weight="700" textLength="70.0" lengthAdjust="spacing">Welcome</text>
<text x="45.0" y="253.5" font-size="16" fill="#fff" font-weight="700" textLength="61.0" lengthAdjust="spacing">Analysis</text>
<text x="64.8" y="209.0" font-size="16" fill="#f2f2f2" textLength="68.4" lengthAdjust="spacing">Welcome</text>
<text x="64.8" y="231.0" font-size="16" fill="#f2f2f2" textLength="56.9" lengthAdjust="spacing">Options</text>
<text x="64.8" y="277.4" font-size="16" fill="#f2f2f2" textLength="112.2" lengthAdjust="spacing">Dynamic Range</text>
<text x="64.8" y="299.3" font-size="16" fill="#f2f2f2" textLength="107.0" lengthAdjust="spacing">Grayscale - 2pt</text>
<text x="64.8" y="321.2" font-size="16" fill="#222" textLength="121.7" lengthAdjust="spacing">Grayscale - Multi</text>
<text x="64.8" y="343.0" font-size="16" fill="#f2f2f2" textLength="92.1" lengthAdjust="spacing">Color Gamut</text>
<text x="64.8" y="364.9" font-size="16" fill="#f2f2f2" textLength="51.0" lengthAdjust="spacing">3D LUT</text>
<text x="64.8" y="386.8" font-size="16" fill="#f2f2f2" textLength="96.8" lengthAdjust="spacing">ColorChecker</text>
<text x="64.8" y="408.8" font-size="16" fill="#f2f2f2" textLength="134.0" lengthAdjust="spacing">Saturation Sweeps</text>
<text x="64.8" y="431.0" font-size="16" fill="#f2f2f2" textLength="138.4" lengthAdjust="spacing">Luminance Sweeps</text>
<text x="64.8" y="452.8" font-size="16" fill="#f2f2f2" textLength="69.5" lengthAdjust="spacing">Additivity</text>
<text x="64.8" y="475.2" font-size="16" fill="#f2f2f2" textLength="131.5" lengthAdjust="spacing">Screen Uniformity</text>
<text x="64.8" y="496.3" font-size="16" fill="#f2f2f2" textLength="128.2" lengthAdjust="spacing">Screen Angularity</text>
<text x="64.8" y="518.4" font-size="16" fill="#f2f2f2" textLength="111.7" lengthAdjust="spacing">Screen Stability</text>
<text x="64.8" y="540.3" font-size="16" fill="#f2f2f2" textLength="145.4" lengthAdjust="spacing">Spectral Power Dist.</text>
<text x="309.7" y="117.0" font-size="18" fill="#ececec" textLength="69.5" lengthAdjust="spacing">History 1</text>
<circle cx="411.2" cy="111.9" r="14.8" fill="url(#dk)"/><path d="M406.7,113.5 H415.7 M411.2,109 V118" stroke="#a8a8a8" stroke-width="1.1"/>
<text x="1835.0" y="104.0" font-size="15.5" fill="#f2f2f2" textLength="98.6" lengthAdjust="spacing">X-Rite i1Pro 2</text>
<text x="1835.0" y="125.7" font-size="15.5" fill="#f2f2f2" textLength="83.6" lengthAdjust="spacing">Direct View</text>
<text x="2058.4" y="104.0" font-size="15.5" fill="#f2f2f2" textLength="49.2" lengthAdjust="spacing">Source</text>
<text x="2263.0" y="104.0" font-size="15.5" fill="#f2f2f2" textLength="158.0" lengthAdjust="spacing">Direct Display Control</text>
<circle cx="1953.3" cy="108.9" r="15" fill="url(#dd)"/><path d="M1945.7,106.9 H1960.8999999999999 L1953.3,115.10000000000001 Z" fill="#fff"/>
<circle cx="2215.8" cy="108.9" r="15" fill="url(#dd)"/><path d="M2208.2000000000003,106.9 H2223.4 L2215.8,115.10000000000001 Z" fill="#fff"/>
<circle cx="2440" cy="108.9" r="15" fill="url(#dd)"/><path d="M2432.4,106.9 H2447.6 L2440,115.10000000000001 Z" fill="#fff"/>
<circle cx="2013.2" cy="108.9" r="18.6" fill="#0000ff" stroke="#f0f0ff" stroke-width="1.3"/>
<text x="2013.2" y="113.8" font-size="14" fill="#fff" text-anchor="middle">238</text>
<circle cx="2493.8" cy="107.7" r="15" fill="url(#dd)"/><circle cx="2540.3" cy="107.7" r="15" fill="url(#dd)"/>
<g transform="translate(2493.8,107.7)" fill="#dedede"><rect x="-1.7" y="-9.9" width="3.4" height="4.2" rx="0.6" transform="rotate(0)"/><rect x="-1.7" y="-9.9" width="3.4" height="4.2" rx="0.6" transform="rotate(45)"/><rect x="-1.7" y="-9.9" width="3.4" height="4.2" rx="0.6" transform="rotate(90)"/><rect x="-1.7" y="-9.9" width="3.4" height="4.2" rx="0.6" transform="rotate(135)"/><rect x="-1.7" y="-9.9" width="3.4" height="4.2" rx="0.6" transform="rotate(180)"/><rect x="-1.7" y="-9.9" width="3.4" height="4.2" rx="0.6" transform="rotate(225)"/><rect x="-1.7" y="-9.9" width="3.4" height="4.2" rx="0.6" transform="rotate(270)"/><rect x="-1.7" y="-9.9" width="3.4" height="4.2" rx="0.6" transform="rotate(315)"/><path fill-rule="evenodd" d="M0,-7.2 A7.2,7.2 0 1 1 0,7.2 A7.2,7.2 0 1 1 0,-7.2 Z M0,-4.5 A4.5,4.5 0 1 0 0,4.5 A4.5,4.5 0 1 0 0,-4.5 Z"/></g>
<path d="M2536.3,106.8 L2544.2,99.2 V114.4 Z" fill="#fff"/>
<text x="310.0" y="298.0" font-size="57" fill="#f0f0f0" textLength="409.6" lengthAdjust="spacing">Grayscale - Multi</text>
<text x="450.0" y="361.0" font-size="26.5" fill="#f0f0f0" textLength="145.4" lengthAdjust="spacing">dE Formula:</text>
<text x="613.4" y="361.0" font-size="21" fill="#f4f4f4" textLength="46.3" lengthAdjust="spacing">2000</text>
<path d="M787.8,348.2 H799.4 L793.6,356 Z" fill="#000"/>
<text x="554.8" y="404.8" font-size="19" fill="#dcdcdc" text-anchor="middle" textLength="106.5" lengthAdjust="spacing">DeltaE 2000</text>
<rect x="368.7" y="411.9" width="412.6" height="310.6" fill="#222222"/>
<path d="M422.7,411.9 V722.5" stroke="#888" stroke-width="2.0"/>
<path d="M477.9,411.9 V722.5" stroke="#888" stroke-width="2.0"/>
<path d="M533.0,411.9 V722.5" stroke="#888" stroke-width="2.0"/>
<path d="M588.2,411.9 V722.5" stroke="#888" stroke-width="2.0"/>
<path d="M643.9,411.9 V722.5" stroke="#888" stroke-width="2.0"/>
<path d="M697.1,411.9 V722.5" stroke="#888" stroke-width="2.0"/>
<path d="M752.2,411.9 V722.5" stroke="#888" stroke-width="2.0"/>
<rect x="369.5" y="697.4" width="37.3" height="22" fill="#000"/>
<rect x="369.9" y="699.2" width="35.1" height="18.4" fill="url(#b0)"/>
<text x="361.5" y="716.5" font-size="19" fill="#dcdcdc" text-anchor="end">0</text>
<rect x="369.5" y="669.0" width="21.1" height="22" fill="#000"/>
<rect x="369.9" y="670.8" width="18.9" height="18.4" fill="url(#b1)"/>
<text x="361.5" y="688.1" font-size="19" fill="#dcdcdc" text-anchor="end" textLength="22.0" lengthAdjust="spacing">10</text>
<rect x="369.5" y="640.0" width="32.0" height="22" fill="#000"/>
<rect x="369.9" y="641.8" width="29.8" height="18.4" fill="url(#b2)"/>
<text x="361.5" y="659.1" font-size="19" fill="#dcdcdc" text-anchor="end" textLength="22.0" lengthAdjust="spacing">20</text>
<rect x="369.5" y="612.2" width="52.7" height="22" fill="#000"/>
<rect x="369.9" y="614.0" width="50.5" height="18.4" fill="url(#b3)"/>
<text x="361.5" y="631.3" font-size="19" fill="#dcdcdc" text-anchor="end" textLength="22.0" lengthAdjust="spacing">30</text>
<rect x="369.5" y="584.1" width="69.5" height="22" fill="#000"/>
<rect x="369.9" y="585.9" width="67.3" height="18.4" fill="url(#b4)"/>
<text x="361.5" y="603.2" font-size="19" fill="#dcdcdc" text-anchor="end" textLength="22.0" lengthAdjust="spacing">40</text>
<rect x="369.5" y="555.2" width="84.8" height="22" fill="#000"/>
<rect x="369.9" y="557.0" width="82.6" height="18.4" fill="url(#b5)"/>
<text x="361.5" y="574.3" font-size="19" fill="#dcdcdc" text-anchor="end" textLength="22.0" lengthAdjust="spacing">50</text>
<rect x="369.5" y="527.3" width="96.1" height="22" fill="#000"/>
<rect x="369.9" y="529.1" width="93.9" height="18.4" fill="url(#b6)"/>
<text x="361.5" y="546.4" font-size="19" fill="#dcdcdc" text-anchor="end" textLength="22.0" lengthAdjust="spacing">60</text>
<rect x="369.5" y="499.7" width="105.1" height="22" fill="#000"/>
<rect x="369.9" y="501.5" width="102.9" height="18.4" fill="url(#b7)"/>
<text x="361.5" y="518.8" font-size="19" fill="#dcdcdc" text-anchor="end" textLength="22.0" lengthAdjust="spacing">70</text>
<rect x="369.5" y="470.3" width="108.1" height="22" fill="#000"/>
<rect x="369.9" y="472.1" width="105.9" height="18.4" fill="url(#b8)"/>
<text x="361.5" y="489.4" font-size="19" fill="#dcdcdc" text-anchor="end" textLength="22.0" lengthAdjust="spacing">80</text>
<rect x="369.5" y="443.0" width="95.4" height="22" fill="#000"/>
<rect x="369.9" y="444.8" width="93.2" height="18.4" fill="url(#b9)"/>
<text x="361.5" y="462.1" font-size="19" fill="#dcdcdc" text-anchor="end" textLength="22.0" lengthAdjust="spacing">90</text>
<rect x="369.5" y="414.7" width="49.2" height="22" fill="#000"/>
<rect x="369.9" y="416.5" width="47.0" height="18.4" fill="url(#b10)"/>
<text x="361.5" y="433.8" font-size="19" fill="#dcdcdc" text-anchor="end" textLength="33.0" lengthAdjust="spacing">100</text>
<rect x="368.7" y="411.9" width="412.6" height="310.6" fill="none" stroke="#8a8a8a" stroke-width="1.9"/>
<path d="M360.1,411.9 H368.7" stroke="#dcdcdc" stroke-width="1.8"/>
<path d="M360.1,441.8 H368.7" stroke="#dcdcdc" stroke-width="1.8"/>
<path d="M360.1,469.3 H368.7" stroke="#dcdcdc" stroke-width="1.8"/>
<path d="M360.1,497.1 H368.7" stroke="#dcdcdc" stroke-width="1.8"/>
<path d="M360.1,525.9 H368.7" stroke="#dcdcdc" stroke-width="1.8"/>
<path d="M360.1,554.2 H368.7" stroke="#dcdcdc" stroke-width="1.8"/>
<path d="M360.1,582.5 H368.7" stroke="#dcdcdc" stroke-width="1.8"/>
<path d="M360.1,610.8 H368.7" stroke="#dcdcdc" stroke-width="1.8"/>
<path d="M360.1,638.6 H368.7" stroke="#dcdcdc" stroke-width="1.8"/>
<path d="M360.1,666.2 H368.7" stroke="#dcdcdc" stroke-width="1.8"/>
<path d="M360.1,695.8 H368.7" stroke="#dcdcdc" stroke-width="1.8"/>
<path d="M360.1,722.5 H368.7" stroke="#dcdcdc" stroke-width="1.8"/>
<path d="M368.7,722.5 V730.8" stroke="#dcdcdc" stroke-width="1.8"/>
<text x="368.7" y="751.8" font-size="19" fill="#dcdcdc" text-anchor="middle">0</text>
<path d="M422.7,722.5 V730.8" stroke="#dcdcdc" stroke-width="1.8"/>
<text x="422.7" y="751.8" font-size="19" fill="#dcdcdc" text-anchor="middle">2</text>
<path d="M477.9,722.5 V730.8" stroke="#dcdcdc" stroke-width="1.8"/>
<text x="477.9" y="751.8" font-size="19" fill="#dcdcdc" text-anchor="middle">4</text>
<path d="M533.0,722.5 V730.8" stroke="#dcdcdc" stroke-width="1.8"/>
<text x="533.0" y="751.8" font-size="19" fill="#dcdcdc" text-anchor="middle">6</text>
<path d="M588.2,722.5 V730.8" stroke="#dcdcdc" stroke-width="1.8"/>
<text x="588.2" y="751.8" font-size="19" fill="#dcdcdc" text-anchor="middle">8</text>
<path d="M643.9,722.5 V730.8" stroke="#dcdcdc" stroke-width="1.8"/>
<text x="643.9" y="751.8" font-size="19" fill="#dcdcdc" text-anchor="middle" textLength="22.0" lengthAdjust="spacing">10</text>
<path d="M697.1,722.5 V730.8" stroke="#dcdcdc" stroke-width="1.8"/>
<text x="697.1" y="751.8" font-size="19" fill="#dcdcdc" text-anchor="middle" textLength="22.0" lengthAdjust="spacing">12</text>
<path d="M752.2,722.5 V730.8" stroke="#dcdcdc" stroke-width="1.8"/>
<text x="752.2" y="751.8" font-size="19" fill="#dcdcdc" text-anchor="middle" textLength="22.0" lengthAdjust="spacing">14</text>
<text x="1241.0" y="285.0" font-size="19" fill="#dcdcdc" text-anchor="middle" textLength="111.0" lengthAdjust="spacing">RGB Balance</text>
<rect x="876.1" y="292" width="770.9" height="431.1" fill="#222222"/>
<path d="M876.1,681.0 H1647.0" stroke="#8a8a8a" stroke-width="1.6"/>
<path d="M867.3,681.0 H876.1" stroke="#e4e4e4" stroke-width="1.8"/>
<text x="867.6" y="688.2" font-size="19" fill="#dcdcdc" text-anchor="end" textLength="22.0" lengthAdjust="spacing">96</text>
<path d="M876.1,594.3 H1647.0" stroke="#8a8a8a" stroke-width="1.6"/>
<path d="M867.3,594.3 H876.1" stroke="#e4e4e4" stroke-width="1.8"/>
<text x="867.6" y="604.0" font-size="19" fill="#dcdcdc" text-anchor="end" textLength="22.0" lengthAdjust="spacing">98</text>
<path d="M876.1,510.0 H1647.0" stroke="#8a8a8a" stroke-width="1.6"/>
<path d="M867.3,510.0 H876.1" stroke="#e4e4e4" stroke-width="1.8"/>
<text x="867.6" y="517.3" font-size="19" fill="#dcdcdc" text-anchor="end" textLength="33.0" lengthAdjust="spacing">100</text>
<path d="M876.1,423.0 H1647.0" stroke="#8a8a8a" stroke-width="1.6"/>
<path d="M867.3,423.0 H876.1" stroke="#e4e4e4" stroke-width="1.8"/>
<text x="867.6" y="430.0" font-size="19" fill="#dcdcdc" text-anchor="end" textLength="33.0" lengthAdjust="spacing">102</text>
<path d="M876.1,336.1 H1647.0" stroke="#8a8a8a" stroke-width="1.6"/>
<path d="M867.3,336.1 H876.1" stroke="#e4e4e4" stroke-width="1.8"/>
<text x="867.6" y="343.5" font-size="19" fill="#dcdcdc" text-anchor="end" textLength="33.0" lengthAdjust="spacing">104</text>
<path d="M876.1,723.1 V731.1" stroke="#b8b8b8" stroke-width="1.5"/>
<text x="874.2" y="751.8" font-size="19" fill="#dcdcdc" text-anchor="middle">0</text>
<path d="M951.4,723.1 V731.1" stroke="#b8b8b8" stroke-width="1.5"/>
<text x="951.4" y="751.8" font-size="19" fill="#dcdcdc" text-anchor="middle" textLength="22.0" lengthAdjust="spacing">10</text>
<path d="M1028.6,723.1 V731.1" stroke="#b8b8b8" stroke-width="1.5"/>
<text x="1028.6" y="751.8" font-size="19" fill="#dcdcdc" text-anchor="middle" textLength="22.0" lengthAdjust="spacing">20</text>
<path d="M1105.7,723.1 V731.1" stroke="#b8b8b8" stroke-width="1.5"/>
<text x="1105.7" y="751.8" font-size="19" fill="#dcdcdc" text-anchor="middle" textLength="22.0" lengthAdjust="spacing">30</text>
<path d="M1182.9,723.1 V731.1" stroke="#b8b8b8" stroke-width="1.5"/>
<text x="1182.9" y="751.8" font-size="19" fill="#dcdcdc" text-anchor="middle" textLength="22.0" lengthAdjust="spacing">40</text>
<path d="M1260.1,723.1 V731.1" stroke="#b8b8b8" stroke-width="1.5"/>
<text x="1260.1" y="751.8" font-size="19" fill="#dcdcdc" text-anchor="middle" textLength="22.0" lengthAdjust="spacing">50</text>
<path d="M1337.3,723.1 V731.1" stroke="#b8b8b8" stroke-width="1.5"/>
<text x="1337.3" y="751.8" font-size="19" fill="#dcdcdc" text-anchor="middle" textLength="22.0" lengthAdjust="spacing">60</text>
<path d="M1414.5,723.1 V731.1" stroke="#b8b8b8" stroke-width="1.5"/>
<text x="1414.5" y="751.8" font-size="19" fill="#dcdcdc" text-anchor="middle" textLength="22.0" lengthAdjust="spacing">70</text>
<path d="M1491.6,723.1 V731.1" stroke="#b8b8b8" stroke-width="1.5"/>
<text x="1491.6" y="751.8" font-size="19" fill="#dcdcdc" text-anchor="middle" textLength="22.0" lengthAdjust="spacing">80</text>
<path d="M1568.8,723.1 V731.1" stroke="#b8b8b8" stroke-width="1.5"/>
<text x="1568.8" y="751.8" font-size="19" fill="#dcdcdc" text-anchor="middle" textLength="22.0" lengthAdjust="spacing">90</text>
<path d="M1646.0,723.1 V731.1" stroke="#b8b8b8" stroke-width="1.5"/>
<text x="1646.0" y="751.8" font-size="19" fill="#dcdcdc" text-anchor="middle" textLength="33.0" lengthAdjust="spacing">100</text>
<clipPath id="cpr"><rect x="876.1" y="292" width="770.9" height="431.1"/></clipPath>
<polyline points="876.1,468.0 951.4,519.1 1028.6,499.5 1105.7,479.5 1182.9,478.5 1260.1,473.9 1337.3,475.7 1414.5,463.8 1491.6,459.6 1568.8,457.1 1646.0,493.6" fill="none" stroke="#008000" stroke-width="3.6" stroke-linejoin="round" clip-path="url(#cpr)"/>
<polyline points="876.1,479.5 951.4,540.2 1028.6,518.1 1105.7,498.8 1182.9,501.3 1260.1,500.2 1337.3,504.4 1414.5,496.4 1491.6,496.7 1568.8,499.9 1646.0,549.6" fill="none" stroke="#ff0000" stroke-width="3.6" stroke-linejoin="round" clip-path="url(#cpr)"/>
<polyline points="876.1,432.2 951.4,506.9 1028.6,522.6 1105.7,525.8 1182.9,542.6 1260.1,554.2 1337.3,568.9 1414.5,566.1 1491.6,563.6 1568.8,541.6 1646.0,494.3" fill="none" stroke="#0000ff" stroke-width="3.6" stroke-linejoin="round" clip-path="url(#cpr)"/>
<rect x="876.1" y="292" width="770.9" height="431.1" fill="none" stroke="#8a8a8a" stroke-width="1.9"/>
<text x="1798.8" y="285.0" font-size="19" fill="#dcdcdc" text-anchor="middle" textLength="111.0" lengthAdjust="spacing">RGB Balance</text>
<rect x="1733.2" y="292.3" width="171.8" height="437.7" fill="#222222"/>
<path d="M1733.2,688.3 H1905.0" stroke="#8a8a8a" stroke-width="1.6"/>
<path d="M1724.8,688.3 H1733.2" stroke="#e4e4e4" stroke-width="1.8"/>
<text x="1724.9" y="695.9" font-size="19" fill="#dcdcdc" text-anchor="end" textLength="22.0" lengthAdjust="spacing">96</text>
<path d="M1733.2,600.7 H1905.0" stroke="#8a8a8a" stroke-width="1.6"/>
<path d="M1724.8,600.7 H1733.2" stroke="#e4e4e4" stroke-width="1.8"/>
<text x="1724.9" y="608.3" font-size="19" fill="#dcdcdc" text-anchor="end" textLength="22.0" lengthAdjust="spacing">98</text>
<path d="M1733.2,513.1 H1905.0" stroke="#8a8a8a" stroke-width="1.6"/>
<path d="M1724.8,513.1 H1733.2" stroke="#e4e4e4" stroke-width="1.8"/>
<text x="1724.9" y="520.7" font-size="19" fill="#dcdcdc" text-anchor="end" textLength="33.0" lengthAdjust="spacing">100</text>
<path d="M1733.2,425.5 H1905.0" stroke="#8a8a8a" stroke-width="1.6"/>
<path d="M1724.8,425.5 H1733.2" stroke="#e4e4e4" stroke-width="1.8"/>
<text x="1724.9" y="433.1" font-size="19" fill="#dcdcdc" text-anchor="end" textLength="33.0" lengthAdjust="spacing">102</text>
<path d="M1733.2,337.9 H1905.0" stroke="#8a8a8a" stroke-width="1.6"/>
<path d="M1724.8,337.9 H1733.2" stroke="#e4e4e4" stroke-width="1.8"/>
<text x="1724.9" y="345.5" font-size="19" fill="#dcdcdc" text-anchor="end" textLength="33.0" lengthAdjust="spacing">104</text>
<rect x="1748.4" y="555.8" width="47" height="174.2" fill="#000"/><rect x="1793.6" y="499.8" width="92.8" height="230.2" fill="#000"/>
<rect x="1750.2" y="557.4" width="43.4" height="172.6" fill="url(#br)"/>
<rect x="1796" y="501.4" width="43.4" height="228.6" fill="url(#bg)"/>
<rect x="1842" y="501.4" width="43.4" height="228.6" fill="url(#bb)"/>
<rect x="1733.2" y="292.3" width="171.8" height="437.7" fill="none" stroke="#8a8a8a" stroke-width="1.9"/>
<path d="M1733.2,730.0 V738.6" stroke="#c8c8c8" stroke-width="1.6"/>
<path d="M1905.0,730.0 V738.6" stroke="#c8c8c8" stroke-width="1.6"/>
<text x="1818.8" y="751.8" font-size="19" fill="#dcdcdc" text-anchor="middle" textLength="33.0" lengthAdjust="spacing">100</text>
<text x="2236.3" y="285.0" font-size="19" fill="#dcdcdc" text-anchor="middle" textLength="146.6" lengthAdjust="spacing">Gamma Log/Log</text>
<rect x="1984.8" y="293.4" width="537.2" height="429.2" fill="#222222"/>
<path d="M1975.8,293.2 H1984.8" stroke="#e4e4e4" stroke-width="1.8"/>
<text x="1976.5" y="300.0" font-size="19" fill="#dcdcdc" text-anchor="end" textLength="26.7" lengthAdjust="spacing">2.8</text>
<path d="M1984.8,380.8 H2522.0" stroke="#8a8a8a" stroke-width="1.6"/>
<path d="M1975.8,380.8 H1984.8" stroke="#e4e4e4" stroke-width="1.8"/>
<text x="1976.5" y="387.6" font-size="19" fill="#dcdcdc" text-anchor="end" textLength="26.7" lengthAdjust="spacing">2.6</text>
<path d="M1984.8,465.1 H2522.0" stroke="#8a8a8a" stroke-width="1.6"/>
<path d="M1975.8,465.1 H1984.8" stroke="#e4e4e4" stroke-width="1.8"/>
<text x="1976.5" y="471.9" font-size="19" fill="#dcdcdc" text-anchor="end" textLength="26.7" lengthAdjust="spacing">2.4</text>
<path d="M1984.8,551.9 H2522.0" stroke="#8a8a8a" stroke-width="1.6"/>
<path d="M1975.8,551.9 H1984.8" stroke="#e4e4e4" stroke-width="1.8"/>
<text x="1976.5" y="558.7" font-size="19" fill="#dcdcdc" text-anchor="end" textLength="26.7" lengthAdjust="spacing">2.2</text>
<path d="M1984.8,638.8 H2522.0" stroke="#8a8a8a" stroke-width="1.6"/>
<path d="M1975.8,638.8 H1984.8" stroke="#e4e4e4" stroke-width="1.8"/>
<text x="1976.5" y="645.6" font-size="19" fill="#dcdcdc" text-anchor="end">2</text>
<path d="M1975.8,722.6 H1984.8" stroke="#e4e4e4" stroke-width="1.8"/>
<text x="1976.5" y="729.4" font-size="19" fill="#dcdcdc" text-anchor="end" textLength="26.7" lengthAdjust="spacing">1.8</text>
<path d="M1984.8,722.6 V730.9" stroke="#c8c8c8" stroke-width="1.5"/>
<text x="1984.8" y="751.8" font-size="19" fill="#dcdcdc" text-anchor="middle">0</text>
<path d="M2092.2,722.6 V730.9" stroke="#c8c8c8" stroke-width="1.5"/>
<text x="2092.2" y="751.8" font-size="19" fill="#dcdcdc" text-anchor="middle" textLength="22.0" lengthAdjust="spacing">20</text>
<path d="M2199.7,722.6 V730.9" stroke="#c8c8c8" stroke-width="1.5"/>
<text x="2199.7" y="751.8" font-size="19" fill="#dcdcdc" text-anchor="middle" textLength="22.0" lengthAdjust="spacing">40</text>
<path d="M2307.1,722.6 V730.9" stroke="#c8c8c8" stroke-width="1.5"/>
<text x="2307.1" y="751.8" font-size="19" fill="#dcdcdc" text-anchor="middle" textLength="22.0" lengthAdjust="spacing">60</text>
<path d="M2414.6,722.6 V730.9" stroke="#c8c8c8" stroke-width="1.5"/>
<text x="2414.6" y="751.8" font-size="19" fill="#dcdcdc" text-anchor="middle" textLength="22.0" lengthAdjust="spacing">80</text>
<path d="M2522.0,722.6 V730.9" stroke="#c8c8c8" stroke-width="1.5"/>
<text x="2522.0" y="751.8" font-size="19" fill="#dcdcdc" text-anchor="middle" textLength="33.0" lengthAdjust="spacing">100</text>
<clipPath id="cpg"><rect x="1984.8" y="293.4" width="537.2" height="429.2"/></clipPath>
<polyline points="1984.8,945.5 2038.5,625.5 2092.2,585.3 2146.0,571.7 2199.7,557.9 2253.4,551.6 2307.1,545.3 2360.8,553.6 2414.6,565.8 2468.3,611.4 2522.0,516.8" fill="none" stroke="#808080" stroke-width="3.3" stroke-linejoin="round" clip-path="url(#cpg)"/>
<polyline points="2000.9,751.2 2003.6,736.8 2006.3,723.2 2009.0,710.9 2011.7,700.1 2014.3,690.6 2017.0,682.0 2019.7,674.3 2022.4,667.2 2025.1,660.8 2027.8,654.9 2030.5,649.5 2033.1,644.5 2035.8,639.8 2038.5,635.4 2041.2,631.4 2043.9,627.5 2046.6,624.0 2049.3,620.6 2051.9,617.4 2054.6,614.4 2057.3,611.5 2060.0,608.8 2062.7,606.3 2065.4,603.8 2068.1,601.5 2070.8,599.2 2073.4,597.1 2076.1,595.1 2078.8,593.1 2081.5,591.2 2084.2,589.4 2086.9,587.7 2089.6,586.1 2092.2,584.5 2094.9,582.9 2097.6,581.4 2100.3,580.0 2103.0,578.6 2105.7,577.3 2108.4,576.0 2111.0,574.7 2113.7,573.5 2116.4,572.3 2119.1,571.2 2121.8,570.1 2124.5,569.0 2127.2,567.9 2129.8,566.9 2132.5,565.9 2135.2,565.0 2137.9,564.1 2140.6,563.1 2143.3,562.3 2146.0,561.4 2148.6,560.6 2151.3,559.7 2154.0,558.9 2156.7,558.2 2159.4,557.4 2162.1,556.7 2164.8,555.9 2167.4,555.2 2170.1,554.5 2172.8,553.8 2175.5,553.2 2178.2,552.5 2180.9,551.9 2183.6,551.3 2186.2,550.7 2188.9,550.1 2191.6,549.5 2194.3,548.9 2197.0,548.4 2199.7,547.8 2202.4,547.3 2205.1,546.7 2207.7,546.2 2210.4,545.7 2213.1,545.2 2215.8,544.7 2218.5,544.2 2221.2,543.8 2223.9,543.3 2226.5,542.8 2229.2,542.4 2231.9,541.9 2234.6,541.5 2237.3,541.1 2240.0,540.7 2242.7,540.2 2245.3,539.8 2248.0,539.4 2250.7,539.0 2253.4,538.7 2256.1,538.3 2258.8,537.9 2261.5,537.5 2264.1,537.2 2266.8,536.8 2269.5,536.5 2272.2,536.1 2274.9,535.8 2277.6,535.4 2280.3,535.1 2282.9,534.8 2285.6,534.5 2288.3,534.1 2291.0,533.8 2293.7,533.5 2296.4,533.2 2299.1,532.9 2301.7,532.6 2304.4,532.3 2307.1,532.0 2309.8,531.7 2312.5,531.5 2315.2,531.2 2317.9,530.9 2320.6,530.6 2323.2,530.4 2325.9,530.1 2328.6,529.8 2331.3,529.6 2334.0,529.3 2336.7,529.1 2339.4,528.8 2342.0,528.6 2344.7,528.3 2347.4,528.1 2350.1,527.9 2352.8,527.6 2355.5,527.4 2358.2,527.2 2360.8,526.9 2363.5,526.7 2366.2,526.5 2368.9,526.3 2371.6,526.1 2374.3,525.8 2377.0,525.6 2379.6,525.4 2382.3,525.2 2385.0,525.0 2387.7,524.8 2390.4,524.6 2393.1,524.4 2395.8,524.2 2398.4,524.0 2401.1,523.8 2403.8,523.6 2406.5,523.4 2409.2,523.3 2411.9,523.1 2414.6,522.9 2417.2,522.7 2419.9,522.5 2422.6,522.3 2425.3,522.2 2428.0,522.0 2430.7,521.8 2433.4,521.7 2436.0,521.5 2438.7,521.3 2441.4,521.2 2444.1,521.0 2446.8,520.8 2449.5,520.7 2452.2,520.5 2454.8,520.3 2457.5,520.2 2460.2,520.0 2462.9,519.9 2465.6,519.7 2468.3,519.6 2471.0,519.4 2473.7,519.3 2476.3,519.1 2479.0,519.0 2481.7,518.8 2484.4,518.7 2487.1,518.5 2489.8,518.4 2492.5,518.3 2495.1,518.1 2497.8,518.0 2500.5,517.9 2503.2,517.7 2505.9,517.6 2508.6,517.5 2511.3,517.3 2513.9,517.2 2516.6,517.1 2519.3,516.9 2522.0,516.8" fill="none" stroke="#ffff00" stroke-width="3.4" stroke-linejoin="round" clip-path="url(#cpg)"/>
<rect x="1984.8" y="293.4" width="537.2" height="429.2" fill="none" stroke="#8a8a8a" stroke-width="1.9"/>
<path d="M1984.8,293.4 H2522.0" stroke="#9a9a9a" stroke-width="2.6"/>
<text x="417.2" y="809.0" font-size="39.5" fill="#f0f0f0" textLength="293.1" lengthAdjust="spacing">Avg dE2000: 2.6</text>
<text x="973.8" y="809.0" font-size="39.5" fill="#f0f0f0" textLength="256.2" lengthAdjust="spacing">Avg CCT: 6411</text>
<text x="1493.6" y="809.0" font-size="39.5" fill="#f0f0f0" textLength="349.9" lengthAdjust="spacing">Contrast Ratio: 984</text>
<text x="2023.0" y="809.0" font-size="39.5" fill="#f0f0f0" textLength="424.8" lengthAdjust="spacing">Average Gamma: 2.141</text>
<text x="542.6" y="1000.9" font-size="15" fill="#fff" text-anchor="middle">0</text>
<text x="732.7" y="1000.9" font-size="15" fill="#fff" text-anchor="middle">10</text>
<text x="922.9" y="1000.9" font-size="15" fill="#fff" text-anchor="middle">20</text>
<text x="1113.0" y="1000.9" font-size="15" fill="#fff" text-anchor="middle">30</text>
<text x="1303.1" y="1000.9" font-size="15" fill="#fff" text-anchor="middle">40</text>
<text x="1493.2" y="1000.9" font-size="15" fill="#fff" text-anchor="middle">50</text>
<text x="1683.4" y="1000.9" font-size="15" fill="#fff" text-anchor="middle">60</text>
<text x="1873.5" y="1000.9" font-size="15" fill="#fff" text-anchor="middle">70</text>
<text x="2063.6" y="1000.9" font-size="15" fill="#fff" text-anchor="middle">80</text>
<text x="2253.8" y="1000.9" font-size="15" fill="#fff" text-anchor="middle">90</text>
<text x="2443.9" y="1000.9" font-size="15" fill="#fff" text-anchor="middle">100</text>
<text transform="translate(447.5,873.5) rotate(-90)" font-size="15.5" fill="#fff" text-anchor="middle" textLength="46" lengthAdjust="spacing">Actual</text>
<text transform="translate(447.5,951.3) rotate(-90)" font-size="15.5" fill="#fff" text-anchor="middle" textLength="46.8" lengthAdjust="spacing">Target</text>
<text x="329.0" y="1103.4" font-size="40.5" fill="#f0f0f0" textLength="295.3" lengthAdjust="spacing">Current Reading</text>
<text x="329.0" y="1161.0" font-size="34" fill="#f0f0f0" textLength="138.0" lengthAdjust="spacing">x: 0.3104</text>
<text x="531.4" y="1161.0" font-size="34" fill="#f0f0f0" textLength="120.3" lengthAdjust="spacing">y: 0.329</text>
<text x="329.0" y="1207.0" font-size="34" fill="#f0f0f0" textLength="149.4" lengthAdjust="spacing">u': 0.1963</text>
<text x="531.4" y="1207.0" font-size="34" fill="#f0f0f0" textLength="129.0" lengthAdjust="spacing">v': 0.468</text>
<text x="329.0" y="1253.0" font-size="34" fill="#f0f0f0" textLength="252.5" lengthAdjust="spacing">cd/m²: 349.3813</text>
<text x="329.0" y="1298.7" font-size="34" fill="#f0f0f0" textLength="208.2" lengthAdjust="spacing">ΔE 2000: 1.78</text>
<text x="941.9" y="1056.7" font-size="19" fill="#dcdcdc" text-anchor="middle" textLength="101.3" lengthAdjust="spacing">CIE 1931 xy</text>
<rect x="794.8" y="1064" width="340.6" height="8" fill="url(#c0)" shape-rendering="crispEdges"/>
<rect x="794.8" y="1072" width="340.6" height="8" fill="url(#c1)" shape-rendering="crispEdges"/>
<rect x="794.8" y="1080" width="340.6" height="8" fill="url(#c2)" shape-rendering="crispEdges"/>
<rect x="794.8" y="1088" width="340.6" height="8" fill="url(#c3)" shape-rendering="crispEdges"/>
<rect x="794.8" y="1096" width="340.6" height="8" fill="url(#c4)" shape-rendering="crispEdges"/>
<rect x="794.8" y="1104" width="340.6" height="8" fill="url(#c5)" shape-rendering="crispEdges"/>
<rect x="794.8" y="1112" width="340.6" height="8" fill="url(#c6)" shape-rendering="crispEdges"/>
<rect x="794.8" y="1120" width="340.6" height="8" fill="url(#c7)" shape-rendering="crispEdges"/>
<rect x="794.8" y="1128" width="340.6" height="8" fill="url(#c8)" shape-rendering="crispEdges"/>
<rect x="794.8" y="1136" width="340.6" height="8" fill="url(#c9)" shape-rendering="crispEdges"/>
<rect x="794.8" y="1144" width="340.6" height="8" fill="url(#c10)" shape-rendering="crispEdges"/>
<rect x="794.8" y="1152" width="340.6" height="8" fill="url(#c11)" shape-rendering="crispEdges"/>
<rect x="794.8" y="1160" width="340.6" height="8" fill="url(#c12)" shape-rendering="crispEdges"/>
<rect x="794.8" y="1168" width="340.6" height="8" fill="url(#c13)" shape-rendering="crispEdges"/>
<rect x="794.8" y="1176" width="340.6" height="8" fill="url(#c14)" shape-rendering="crispEdges"/>
<rect x="794.8" y="1184" width="340.6" height="8" fill="url(#c15)" shape-rendering="crispEdges"/>
<rect x="794.8" y="1192" width="340.6" height="8" fill="url(#c16)" shape-rendering="crispEdges"/>
<rect x="794.8" y="1200" width="340.6" height="8" fill="url(#c17)" shape-rendering="crispEdges"/>
<rect x="794.8" y="1208" width="340.6" height="8" fill="url(#c18)" shape-rendering="crispEdges"/>
<rect x="794.8" y="1216" width="340.6" height="8" fill="url(#c19)" shape-rendering="crispEdges"/>
<rect x="794.8" y="1224" width="340.6" height="8" fill="url(#c20)" shape-rendering="crispEdges"/>
<rect x="794.8" y="1232" width="340.6" height="8" fill="url(#c21)" shape-rendering="crispEdges"/>
<rect x="794.8" y="1240" width="340.6" height="8" fill="url(#c22)" shape-rendering="crispEdges"/>
<rect x="794.8" y="1248" width="340.6" height="8" fill="url(#c23)" shape-rendering="crispEdges"/>
<rect x="794.8" y="1256" width="340.6" height="8" fill="url(#c24)" shape-rendering="crispEdges"/>
<rect x="794.8" y="1264" width="340.6" height="8" fill="url(#c25)" shape-rendering="crispEdges"/>
<rect x="794.8" y="1272" width="340.6" height="8" fill="url(#c26)" shape-rendering="crispEdges"/>
<rect x="794.8" y="1280" width="340.6" height="8" fill="url(#c27)" shape-rendering="crispEdges"/>
<clipPath id="cpc"><rect x="794.8" y="1063.8" width="340.6" height="223.9"/></clipPath>
<path d="M828.6,1293.4 L836.6,1287.7 Q986.4,1181 1135.7,1099.7 L1145,1094.6" fill="none" stroke="#000" stroke-width="3.7" clip-path="url(#cpc)"/>
<rect x="794.8" y="1063.8" width="340.6" height="223.9" fill="none" stroke="#8a8a8a" stroke-width="2.2"/>
<path d="M786.0,1128.6 H794.8" stroke="#c8c8c8" stroke-width="1.4"/>
<text x="786.5" y="1135.4" font-size="19" fill="#dcdcdc" text-anchor="end" textLength="37.7" lengthAdjust="spacing">0.34</text>
<path d="M786.0,1219.0 H794.8" stroke="#c8c8c8" stroke-width="1.4"/>
<text x="786.5" y="1225.8" font-size="19" fill="#dcdcdc" text-anchor="end" textLength="37.7" lengthAdjust="spacing">0.32</text>
<path d="M809.9,1287.7 V1296.1" stroke="#c8c8c8" stroke-width="1.5"/>
<text x="809.9" y="1318.0" font-size="19" fill="#dcdcdc" text-anchor="middle" textLength="37.7" lengthAdjust="spacing">0.29</text>
<path d="M877.9,1287.7 V1296.1" stroke="#c8c8c8" stroke-width="1.5"/>
<text x="877.9" y="1318.0" font-size="19" fill="#dcdcdc" text-anchor="middle" textLength="26.7" lengthAdjust="spacing">0.3</text>
<path d="M946.0,1287.7 V1296.1" stroke="#c8c8c8" stroke-width="1.5"/>
<text x="946.0" y="1318.0" font-size="19" fill="#dcdcdc" text-anchor="middle" textLength="37.7" lengthAdjust="spacing">0.31</text>
<path d="M1014.0,1287.7 V1296.1" stroke="#c8c8c8" stroke-width="1.5"/>
<text x="1014.0" y="1318.0" font-size="19" fill="#dcdcdc" text-anchor="middle" textLength="37.7" lengthAdjust="spacing">0.32</text>
<path d="M1082.0,1287.7 V1296.1" stroke="#c8c8c8" stroke-width="1.5"/>
<text x="1082.0" y="1318.0" font-size="19" fill="#dcdcdc" text-anchor="middle" textLength="37.7" lengthAdjust="spacing">0.33</text>
<rect x="955.3" y="1166.1" width="18" height="18" fill="#fdfdfd" stroke="#000" stroke-width="1.9"/>
<circle cx="921.5" cy="1192.5" r="5.5" fill="rgb(26,26,26)" stroke="#000" stroke-width="1.4"/>
<circle cx="967.7" cy="1154.1" r="5.5" fill="rgb(51,51,51)" stroke="#000" stroke-width="1.4"/>
<circle cx="980.0" cy="1143.7" r="5.5" fill="rgb(77,77,77)" stroke="#000" stroke-width="1.4"/>
<circle cx="984.1" cy="1139.2" r="5.5" fill="rgb(102,102,102)" stroke="#000" stroke-width="1.4"/>
<circle cx="986.8" cy="1136.9" r="5.5" fill="rgb(128,128,128)" stroke="#000" stroke-width="1.4"/>
<circle cx="987.5" cy="1136.0" r="5.5" fill="rgb(153,153,153)" stroke="#000" stroke-width="1.4"/>
<circle cx="987.5" cy="1136.9" r="5.5" fill="rgb(179,179,179)" stroke="#000" stroke-width="1.4"/>
<circle cx="984.1" cy="1140.1" r="5.5" fill="rgb(204,204,204)" stroke="#000" stroke-width="1.4"/>
<circle cx="975.2" cy="1149.1" r="5.5" fill="rgb(230,230,230)" stroke="#000" stroke-width="1.4"/>
<circle cx="948.7" cy="1175.3" r="5.5" fill="rgb(255,255,255)" stroke="#000" stroke-width="1.4"/>
<text x="1369.2" y="1048.8" font-size="17.5" fill="#f4f4f4" text-anchor="end">0</text>
<text x="1467.4" y="1048.8" font-size="17.5" fill="#f4f4f4" text-anchor="end">10</text>
<text x="1556.2" y="1048.8" font-size="17.5" fill="#f4f4f4" text-anchor="end">20</text>
<text x="1645.0" y="1048.8" font-size="17.5" fill="#f4f4f4" text-anchor="end">30</text>
<text x="1734.4" y="1048.8" font-size="17.5" fill="#f4f4f4" text-anchor="end">40</text>
<text x="1823.4" y="1048.8" font-size="17.5" fill="#f4f4f4" text-anchor="end">50</text>
<text x="1912.4" y="1048.8" font-size="17.5" fill="#f4f4f4" text-anchor="end">60</text>
<text x="2001.4" y="1048.8" font-size="17.5" fill="#f4f4f4" text-anchor="end">70</text>
<text x="2090.2" y="1048.8" font-size="17.5" fill="#f4f4f4" text-anchor="end">80</text>
<text x="2178.9" y="1048.8" font-size="17.5" fill="#f4f4f4" text-anchor="end">90</text>
<text x="2272.6" y="1048.8" font-size="17.5" fill="#f4f4f4" text-anchor="end">100</text>
<text x="1163.6" y="1082.5" font-size="17.5" fill="#f6f6f6" font-weight="700" textLength="64.9" lengthAdjust="spacing">x: CIE31</text>
<text x="1319.7" y="1082.5" font-size="17.5" fill="#f6f6f6" textLength="51.5" lengthAdjust="spacing">0.2519</text>
<text x="1418.6" y="1082.5" font-size="17.5" fill="#f6f6f6" textLength="51.5" lengthAdjust="spacing">0.3064</text>
<text x="1507.4" y="1082.5" font-size="17.5" fill="#f6f6f6" textLength="51.5" lengthAdjust="spacing">0.3132</text>
<text x="1596.5" y="1082.5" font-size="17.5" fill="#f6f6f6" textLength="51.5" lengthAdjust="spacing">0.3150</text>
<text x="1685.2" y="1082.5" font-size="17.5" fill="#f6f6f6" textLength="51.5" lengthAdjust="spacing">0.3156</text>
<text x="1774.3" y="1082.5" font-size="17.5" fill="#f6f6f6" textLength="51.5" lengthAdjust="spacing">0.3160</text>
<text x="1863.3" y="1082.5" font-size="17.5" fill="#f6f6f6" textLength="51.5" lengthAdjust="spacing">0.3161</text>
<text x="1952.3" y="1082.5" font-size="17.5" fill="#f6f6f6" textLength="51.5" lengthAdjust="spacing">0.3161</text>
<text x="2041.0" y="1082.5" font-size="17.5" fill="#f6f6f6" textLength="51.5" lengthAdjust="spacing">0.3156</text>
<text x="2130.3" y="1082.5" font-size="17.5" fill="#f6f6f6" textLength="51.5" lengthAdjust="spacing">0.3143</text>
<text x="2219.3" y="1082.5" font-size="17.5" fill="#f6f6f6" textLength="51.5" lengthAdjust="spacing">0.3104</text>
<text x="1163.6" y="1113.9" font-size="17.5" fill="#f2f2f2" font-weight="700" textLength="64.9" lengthAdjust="spacing">y: CIE31</text>
<text x="1319.7" y="1113.9" font-size="17.5" fill="#f2f2f2" textLength="51.5" lengthAdjust="spacing">0.2538</text>
<text x="1418.6" y="1113.9" font-size="17.5" fill="#f2f2f2" textLength="51.5" lengthAdjust="spacing">0.3252</text>
<text x="1507.4" y="1113.9" font-size="17.5" fill="#f2f2f2" textLength="51.5" lengthAdjust="spacing">0.3337</text>
<text x="1596.5" y="1113.9" font-size="17.5" fill="#f2f2f2" textLength="51.5" lengthAdjust="spacing">0.3360</text>
<text x="1685.2" y="1113.9" font-size="17.5" fill="#f2f2f2" textLength="51.5" lengthAdjust="spacing">0.3370</text>
<text x="1774.3" y="1113.9" font-size="17.5" fill="#f2f2f2" textLength="51.5" lengthAdjust="spacing">0.3375</text>
<text x="1863.3" y="1113.9" font-size="17.5" fill="#f2f2f2" textLength="51.5" lengthAdjust="spacing">0.3377</text>
<text x="1952.3" y="1113.9" font-size="17.5" fill="#f2f2f2" textLength="51.5" lengthAdjust="spacing">0.3375</text>
<text x="2041.0" y="1113.9" font-size="17.5" fill="#f2f2f2" textLength="51.5" lengthAdjust="spacing">0.3368</text>
<text x="2130.3" y="1113.9" font-size="17.5" fill="#f2f2f2" textLength="51.5" lengthAdjust="spacing">0.3348</text>
<text x="2219.3" y="1113.9" font-size="17.5" fill="#f2f2f2" textLength="51.5" lengthAdjust="spacing">0.3290</text>
<text x="1163.6" y="1145.4" font-size="17.5" fill="#f6f6f6" font-weight="700" textLength="10.9" lengthAdjust="spacing">Y</text>
<text x="1319.7" y="1145.4" font-size="17.5" fill="#f6f6f6" textLength="51.5" lengthAdjust="spacing">0.3550</text>
<text x="1418.6" y="1145.4" font-size="17.5" fill="#f6f6f6" textLength="51.5" lengthAdjust="spacing">3.4537</text>
<text x="1507.4" y="1145.4" font-size="17.5" fill="#f6f6f6" textLength="61.1" lengthAdjust="spacing">11.6026</text>
<text x="1596.5" y="1145.4" font-size="17.5" fill="#f6f6f6" textLength="61.1" lengthAdjust="spacing">25.9673</text>
<text x="1685.2" y="1145.4" font-size="17.5" fill="#f6f6f6" textLength="61.1" lengthAdjust="spacing">47.4281</text>
<text x="1774.3" y="1145.4" font-size="17.5" fill="#f6f6f6" textLength="61.1" lengthAdjust="spacing">77.0186</text>
<text x="1863.3" y="1145.4" font-size="17.5" fill="#f6f6f6" textLength="70.6" lengthAdjust="spacing">113.0700</text>
<text x="1952.3" y="1145.4" font-size="17.5" fill="#f6f6f6" textLength="70.6" lengthAdjust="spacing">159.0372</text>
<text x="2041.0" y="1145.4" font-size="17.5" fill="#f6f6f6" textLength="70.6" lengthAdjust="spacing">215.7191</text>
<text x="2130.3" y="1145.4" font-size="17.5" fill="#f6f6f6" textLength="70.6" lengthAdjust="spacing">282.6321</text>
<text x="2219.3" y="1145.4" font-size="17.5" fill="#f6f6f6" textLength="70.6" lengthAdjust="spacing">349.3813</text>
<text x="1163.6" y="1176.8" font-size="17.5" fill="#f2f2f2" font-weight="700" textLength="68.0" lengthAdjust="spacing">Target Y</text>
<text x="1319.7" y="1176.8" font-size="17.5" fill="#f2f2f2" textLength="51.5" lengthAdjust="spacing">0.0000</text>
<text x="1418.6" y="1176.8" font-size="17.5" fill="#f2f2f2" textLength="51.5" lengthAdjust="spacing">3.6090</text>
<text x="1507.4" y="1176.8" font-size="17.5" fill="#f2f2f2" textLength="61.1" lengthAdjust="spacing">11.5662</text>
<text x="1596.5" y="1176.8" font-size="17.5" fill="#f2f2f2" textLength="61.1" lengthAdjust="spacing">25.2504</text>
<text x="1685.2" y="1176.8" font-size="17.5" fill="#f2f2f2" textLength="61.1" lengthAdjust="spacing">46.4217</text>
<text x="1774.3" y="1176.8" font-size="17.5" fill="#f2f2f2" textLength="61.1" lengthAdjust="spacing">75.4176</text>
<text x="1863.3" y="1176.8" font-size="17.5" fill="#f2f2f2" textLength="70.6" lengthAdjust="spacing">111.2943</text>
<text x="1952.3" y="1176.8" font-size="17.5" fill="#f2f2f2" textLength="70.6" lengthAdjust="spacing">155.5450</text>
<text x="2041.0" y="1176.8" font-size="17.5" fill="#f2f2f2" textLength="70.6" lengthAdjust="spacing">210.9660</text>
<text x="2130.3" y="1176.8" font-size="17.5" fill="#f2f2f2" textLength="70.6" lengthAdjust="spacing">276.4647</text>
<text x="2219.3" y="1176.8" font-size="17.5" fill="#f2f2f2" textLength="70.6" lengthAdjust="spacing">349.3813</text>
<text x="1163.6" y="1208.2" font-size="17.5" fill="#f6f6f6" font-weight="700" textLength="138.5" lengthAdjust="spacing">Gamma Log/Log</text>
<text x="1319.7" y="1208.2" font-size="17.5" fill="#f6f6f6" textLength="51.5" lengthAdjust="spacing">1.2778</text>
<text x="1418.6" y="1208.2" font-size="17.5" fill="#f6f6f6" textLength="51.5" lengthAdjust="spacing">2.0221</text>
<text x="1507.4" y="1208.2" font-size="17.5" fill="#f6f6f6" textLength="51.5" lengthAdjust="spacing">2.1156</text>
<text x="1596.5" y="1208.2" font-size="17.5" fill="#f6f6f6" textLength="51.5" lengthAdjust="spacing">2.1473</text>
<text x="1685.2" y="1208.2" font-size="17.5" fill="#f6f6f6" textLength="51.5" lengthAdjust="spacing">2.1794</text>
<text x="1774.3" y="1208.2" font-size="17.5" fill="#f6f6f6" textLength="51.5" lengthAdjust="spacing">2.1939</text>
<text x="1863.3" y="1208.2" font-size="17.5" fill="#f6f6f6" textLength="51.5" lengthAdjust="spacing">2.2085</text>
<text x="1952.3" y="1208.2" font-size="17.5" fill="#f6f6f6" textLength="51.5" lengthAdjust="spacing">2.1893</text>
<text x="2041.0" y="1208.2" font-size="17.5" fill="#f6f6f6" textLength="51.5" lengthAdjust="spacing">2.1609</text>
<text x="2130.3" y="1208.2" font-size="17.5" fill="#f6f6f6" textLength="51.5" lengthAdjust="spacing">2.0548</text>
<text x="2219.3" y="1208.2" font-size="17.5" fill="#f6f6f6" textLength="51.5" lengthAdjust="spacing">2.2749</text>
<text x="1163.6" y="1239.7" font-size="17.5" fill="#f2f2f2" font-weight="700" textLength="31.4" lengthAdjust="spacing">CCT</text>
<text x="1319.7" y="1239.7" font-size="17.5" fill="#f2f2f2" textLength="89.7" lengthAdjust="spacing">19274.0000</text>
<text x="1418.6" y="1239.7" font-size="17.5" fill="#f2f2f2" textLength="80.2" lengthAdjust="spacing">6893.0000</text>
<text x="1507.4" y="1239.7" font-size="17.5" fill="#f2f2f2" textLength="80.2" lengthAdjust="spacing">6445.0000</text>
<text x="1596.5" y="1239.7" font-size="17.5" fill="#f2f2f2" textLength="80.2" lengthAdjust="spacing">6338.0000</text>
<text x="1685.2" y="1239.7" font-size="17.5" fill="#f2f2f2" textLength="80.2" lengthAdjust="spacing">6299.0000</text>
<text x="1774.3" y="1239.7" font-size="17.5" fill="#f2f2f2" textLength="80.2" lengthAdjust="spacing">6279.0000</text>
<text x="1863.3" y="1239.7" font-size="17.5" fill="#f2f2f2" textLength="80.2" lengthAdjust="spacing">6270.0000</text>
<text x="1952.3" y="1239.7" font-size="17.5" fill="#f2f2f2" textLength="80.2" lengthAdjust="spacing">6275.0000</text>
<text x="2041.0" y="1239.7" font-size="17.5" fill="#f2f2f2" textLength="80.2" lengthAdjust="spacing">6303.0000</text>
<text x="2130.3" y="1239.7" font-size="17.5" fill="#f2f2f2" textLength="80.2" lengthAdjust="spacing">6382.0000</text>
<text x="2219.3" y="1239.7" font-size="17.5" fill="#f2f2f2" textLength="80.2" lengthAdjust="spacing">6630.0000</text>
<text x="1163.6" y="1271.1" font-size="17.5" fill="#f6f6f6" font-weight="700" textLength="67.5" lengthAdjust="spacing">ΔE 2000</text>
<text x="1319.7" y="1271.1" font-size="17.5" fill="#f6f6f6" textLength="51.5" lengthAdjust="spacing">1.3464</text>
<text x="1418.6" y="1271.1" font-size="17.5" fill="#f6f6f6" textLength="51.5" lengthAdjust="spacing">0.7563</text>
<text x="1507.4" y="1271.1" font-size="17.5" fill="#f6f6f6" textLength="51.5" lengthAdjust="spacing">1.1507</text>
<text x="1596.5" y="1271.1" font-size="17.5" fill="#f6f6f6" textLength="51.5" lengthAdjust="spacing">1.9091</text>
<text x="1685.2" y="1271.1" font-size="17.5" fill="#f6f6f6" textLength="51.5" lengthAdjust="spacing">2.5187</text>
<text x="1774.3" y="1271.1" font-size="17.5" fill="#f6f6f6" textLength="51.5" lengthAdjust="spacing">3.0770</text>
<text x="1863.3" y="1271.1" font-size="17.5" fill="#f6f6f6" textLength="51.5" lengthAdjust="spacing">3.4911</text>
<text x="1952.3" y="1271.1" font-size="17.5" fill="#f6f6f6" textLength="51.5" lengthAdjust="spacing">3.8191</text>
<text x="2041.0" y="1271.1" font-size="17.5" fill="#f6f6f6" textLength="51.5" lengthAdjust="spacing">3.9296</text>
<text x="2130.3" y="1271.1" font-size="17.5" fill="#f6f6f6" textLength="51.5" lengthAdjust="spacing">3.4629</text>
<text x="2219.3" y="1271.1" font-size="17.5" fill="#f6f6f6" textLength="51.5" lengthAdjust="spacing">1.7807</text>
<text x="1163.6" y="1302.5" font-size="17.5" fill="#f2f2f2" font-weight="700" textLength="54.0" lengthAdjust="spacing">ΔE ITP</text>
<text x="1319.7" y="1302.5" font-size="17.5" fill="#f2f2f2" textLength="61.1" lengthAdjust="spacing">76.6197</text>
<text x="1418.6" y="1302.5" font-size="17.5" fill="#f2f2f2" textLength="51.5" lengthAdjust="spacing">3.1442</text>
<text x="1507.4" y="1302.5" font-size="17.5" fill="#f2f2f2" textLength="51.5" lengthAdjust="spacing">1.5698</text>
<text x="1596.5" y="1302.5" font-size="17.5" fill="#f2f2f2" textLength="51.5" lengthAdjust="spacing">2.9055</text>
<text x="1685.2" y="1302.5" font-size="17.5" fill="#f2f2f2" textLength="51.5" lengthAdjust="spacing">3.1656</text>
<text x="1774.3" y="1302.5" font-size="17.5" fill="#f2f2f2" textLength="51.5" lengthAdjust="spacing">3.4677</text>
<text x="1863.3" y="1302.5" font-size="17.5" fill="#f2f2f2" textLength="51.5" lengthAdjust="spacing">3.5117</text>
<text x="1952.3" y="1302.5" font-size="17.5" fill="#f2f2f2" textLength="51.5" lengthAdjust="spacing">3.6795</text>
<text x="2041.0" y="1302.5" font-size="17.5" fill="#f2f2f2" textLength="51.5" lengthAdjust="spacing">3.4759</text>
<text x="2130.3" y="1302.5" font-size="17.5" fill="#f2f2f2" textLength="51.5" lengthAdjust="spacing">2.8239</text>
<text x="2219.3" y="1302.5" font-size="17.5" fill="#f2f2f2" textLength="51.5" lengthAdjust="spacing">1.5828</text>
<text x="380.5" y="1519.5" font-size="15.2" fill="#2a2a2a" text-anchor="middle" font-weight="700">0</text>
<text x="541.7" y="1519.5" font-size="15.2" fill="#2a2a2a" text-anchor="middle" font-weight="700">10</text>
<text x="702.8" y="1519.5" font-size="15.2" fill="#2a2a2a" text-anchor="middle" font-weight="700">20</text>
<text x="864.0" y="1519.5" font-size="15.2" fill="#2a2a2a" text-anchor="middle" font-weight="700">30</text>
<text x="1025.2" y="1519.5" font-size="15.2" fill="#2a2a2a" text-anchor="middle" font-weight="700">40</text>
<text x="1186.3" y="1519.5" font-size="15.2" fill="#2a2a2a" text-anchor="middle" font-weight="700">50</text>
<text x="1347.5" y="1519.5" font-size="15.2" fill="#2a2a2a" text-anchor="middle" font-weight="700">60</text>
<text x="1508.7" y="1519.5" font-size="15.2" fill="#2a2a2a" text-anchor="middle" font-weight="700">70</text>
<text x="1669.9" y="1519.5" font-size="15.2" fill="#2a2a2a" text-anchor="middle" font-weight="700">80</text>
<text x="1831.0" y="1519.5" font-size="15.2" fill="#2a2a2a" text-anchor="middle" font-weight="700">90</text>
<text x="1992.2" y="1519.5" font-size="15.2" fill="#fff" text-anchor="middle" font-weight="700">100</text>
<circle cx="2111.6" cy="1448.5" r="11.5" fill="url(#lt)"/><path d="M2105.2,1451.2 H2118 L2111.6,1444.5 Z" fill="#333"/>
<rect x="2090" y="1473.2" width="42.8" height="42.8" rx="6.5" fill="url(#gl)" stroke="#1e1e1e" stroke-width="3.4"/><rect x="2101.4" y="1485" width="20.7" height="20" fill="#000"/><rect x="2101.4" y="1485" width="20.7" height="10" fill="#1c1c1c"/>
<circle cx="2183.6" cy="1457.5" r="12.6" fill="url(#lt)" opacity=".85"/>
<circle cx="2252" cy="1457.5" r="12.6" fill="url(#lt)" opacity=".85"/>
<circle cx="2319.3" cy="1457.5" r="12.6" fill="url(#lt)" opacity=".85"/>
<circle cx="2386.7" cy="1457.5" r="12.6" fill="url(#lt)" opacity=".85"/>
<circle cx="2455" cy="1457.5" r="12.6" fill="url(#lt)" opacity=".85"/>
<circle cx="2524.4" cy="1457.5" r="12.6" fill="url(#lt)" opacity=".85"/>
<circle cx="2194.7" cy="1504.2" r="13.8" fill="url(#lt)" opacity=".85"/><circle cx="2514.6" cy="1504.2" r="13.8" fill="url(#lt)" opacity=".85"/>
<g fill="none" stroke="#383838" stroke-width="2.2"><path d="M2509.8,1497.8 l6,6.7 l-6,6.7 M2516.4,1497.8 l6,6.7 l-6,6.7"/><path d="M2199.8,1497.8 l-6,6.7 l6,6.7 M2193.2,1497.8 l-6,6.7 l6,6.7"/></g>
<path d="M2248,1450.5 L2259,1457.5 L2248,1464.5 Z" fill="#3a3a3a"/>
<g fill="none" stroke="#3a3a3a" stroke-width="1.8"><path d="M2316,1451 h-3 v13 h3 M2322.6,1451 h3 v13 h-3"/><path d="M2380,1457.5 c0,-6 7,-6 6.7,0 c0,6 7,6 6.7,0 c0,-6 -7,-6 -6.7,0 c0,6 -7,6 -6.7,0 Z"/><path d="M2461,1457.5 a6,6 0 1 1 -2,-4.6 M2460.5,1449 v4.5 h-4.5"/></g>
<rect x="2180.6" y="1453.3" width="7.9" height="7.9" fill="#262626"/>
<text x="2235.4" y="1515.8" font-size="34" fill="#2c2c2c" textLength="75.2" lengthAdjust="spacing" stroke="#2c2c2c" stroke-width="0.6">Back</text>
<text x="2396.6" y="1515.8" font-size="34" fill="#2c2c2c" textLength="76.4" lengthAdjust="spacing" stroke="#2c2c2c" stroke-width="0.6">Next</text>
<g fill="none" stroke-linejoin="round" stroke-linecap="round"><path d="M2187.9,1489.5 L2228.3,1486.5 L2228.9,1455.2 L2174.6,1446.6 L2177.6,1496.2 L2208.4,1511.9 L2263.9,1494.4 L2232.5,1487.7" stroke="#efe4e4" stroke-width="6.4" opacity=".55"/><path d="M2187.9,1489.5 L2228.3,1486.5 L2228.9,1455.2 L2174.6,1446.6 L2177.6,1496.2 L2208.4,1511.9 L2263.9,1494.4 L2232.5,1487.7" stroke="#a2343b" stroke-width="3.7" opacity=".85"/></g>
<path d="M2189.7,1464.8 L2193.9,1461.6 L2205.4,1475.5 L2231.3,1443.6 L2233.8,1445.5 L2204.8,1484.2 Z" fill="#3a3a3a" stroke="#e8e8e8" stroke-width="2.6" stroke-linejoin="round" paint-order="stroke" opacity=".88"/>
<g transform="translate(2233,1482.3) scale(1.09,1)" font-weight="700" font-size="31.5" opacity=".86"><text x="0" y="0" fill="none" stroke="#f0e2e2" stroke-width="4.2" stroke-linejoin="round" textLength="182.4">NOTEBOOK</text><text x="0" y="0" fill="#982e36" stroke="#982e36" stroke-width="1.3" textLength="182.4">NOTEBOOK</text></g>
<g transform="translate(2433.5,1482.3) scale(1.06,1)" font-size="31.5" opacity=".86"><text x="0" y="0" fill="none" stroke="#e8e8e8" stroke-width="4" stroke-linejoin="round" textLength="108.5">CHECK</text><text x="0" y="0" fill="#424242" stroke="#424242" stroke-width="0.5" textLength="108.5">CHECK</text></g>
</svg>
</body></html>
